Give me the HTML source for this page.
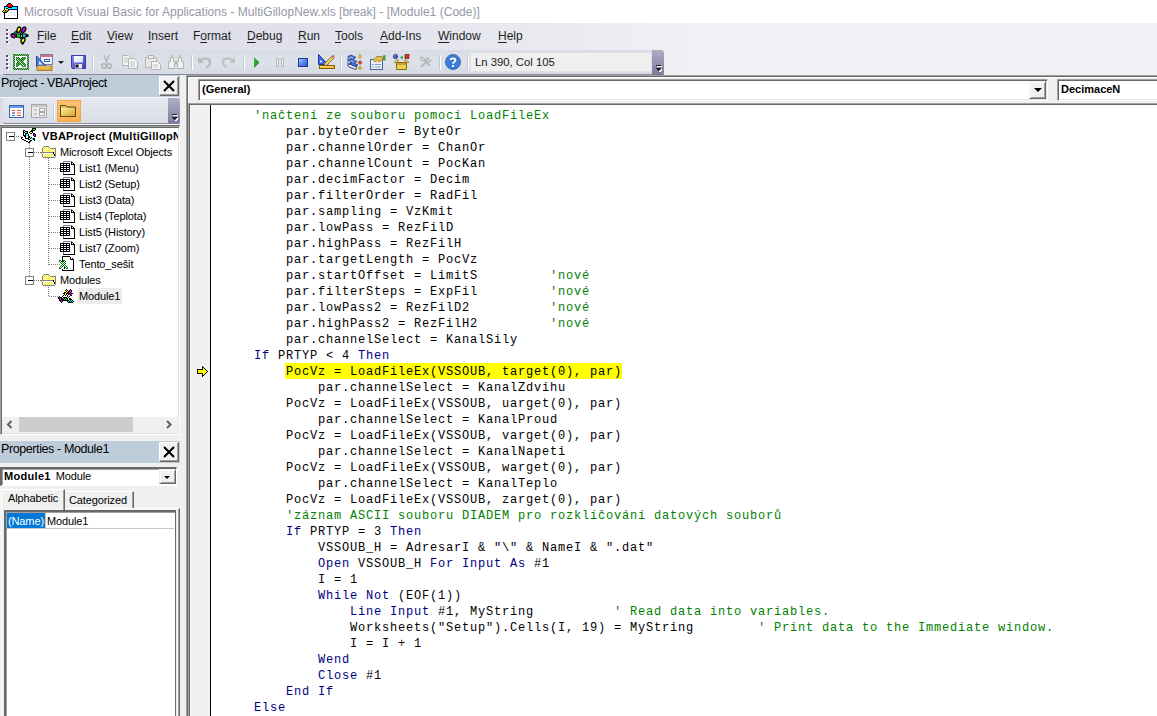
<!DOCTYPE html>
<html><head><meta charset="utf-8">
<style>
*{margin:0;padding:0;box-sizing:border-box}
html,body{width:1157px;height:716px;overflow:hidden;background:#f0f0f0;font-family:"Liberation Sans",sans-serif;position:relative}
.a{position:absolute}
svg{position:absolute;overflow:visible}
.ui{font-family:"Liberation Sans",sans-serif;font-size:12px;color:#1e1e1e;white-space:pre;line-height:14px}
.ui u{text-decoration:underline;text-underline-offset:2px;text-decoration-thickness:1px}
#title{left:0;top:0;width:1157px;height:23px;background:#fff}
#ttext{left:24px;top:5px;color:#9696a6;font-size:12px;letter-spacing:0.03px}
#menubar{display:none}
#dock{left:0;top:23px;width:1157px;height:52px;background:linear-gradient(90deg,#dcdde7 0,#e0e1ea 300px,#e9e9f0 540px,#f0f0f5 700px)}
#tbarea{display:none}
#toolbar{left:3px;top:50px;width:661px;height:25px;border-radius:3px 3px 0 0;background:linear-gradient(#d8dce5 0,#dde1e9 12px,#d6dae3 24px);border-bottom:1px solid #8a89a6}
.grip{width:2px;height:2px;background:#4d4f6d;box-shadow:1px 1px 0 #fff}
.sep{width:1px;background:#fff;border-left:1px solid #c5c8d4}
/* code window */
#codewin{left:186px;top:75px;width:971px;height:641px;background:#f0f0f0;border-left:1px solid #a0a0a0;border-top:1px solid #a0a0a0;box-shadow:inset 1px 1px 0 #696969,inset 2px 2px 0 #fff}
#codewin2{display:none}
.combo{background:#fff;border:1px solid;border-color:#a0a0a0 #fff #fff #a0a0a0;box-shadow:inset 1px 1px 0 #696969,inset -1px -1px 0 #e3e3e3}
.cbt{font-weight:bold;font-size:11px;color:#000;top:3px;left:3px;line-height:13px;white-space:pre}
.dbtn{background:#f0f0f0;border:1px solid;border-color:#f0f0f0 #696969 #696969 #f0f0f0;box-shadow:inset 1px 1px 0 #fff,inset -1px -1px 0 #a0a0a0}
#codepane{left:188px;top:103px;width:969px;height:613px;background:#fff;border-left:1px solid #a0a0a0;border-top:1px solid #a0a0a0;box-shadow:inset 1px 1px 0 #696969}
#margin{left:190px;top:105px;width:21px;height:611px;background:#f0f0f0;border-right:1px solid #000;box-shadow:inset 1px 1px 0 #f8f8f8}
#code{left:222px;top:108px;font-family:"Liberation Mono",monospace;font-size:12px;letter-spacing:0.8px;line-height:16px;white-space:pre;color:#000}
.k{color:#000080}.c{color:#008000}
.hl{background:#ff0;margin-left:-1px;padding:2px 0 0 1px}
/* left panel */
.phdr{background:#bfcddb;height:22px;width:180px;left:0}
.xbtn{width:20px;height:20px;background:#f0f0f0;border:1px solid;border-color:#fff #696969 #696969 #fff;box-shadow:inset -1px -1px 0 #a0a0a0}
#tree{left:0;top:126px;width:180px;height:309px;background:#fff;border:1px solid;border-color:#a0a0a0 #fff #fff #a0a0a0;box-shadow:inset 1px 1px 0 #696969,inset -1px -1px 0 #e3e3e3}
#tline{left:0;top:124px;width:180px;height:2px;background:#696969;border-top:1px solid #f8f8f8}
.ti{font-family:"Liberation Sans",sans-serif;font-size:11px;color:#000;line-height:13px;white-space:pre;letter-spacing:-0.12px}
.dv{border-left:1px dotted #808080;width:1px}
.dh{border-top:1px dotted #808080;height:1px}
.box{width:9px;height:9px;border:1px solid #808080;background:#fff}
.box:after{content:"";position:absolute;left:2px;top:3px;width:5px;height:1px;background:#000}
</style></head><body>

<div id="title" class="a"></div>
<svg style="left:0;top:0" width="24" height="23" viewBox="0 0 24 23" shape-rendering="crispEdges">
 <rect x="4" y="6" width="14" height="13" fill="#000"/>
 <rect x="4" y="6" width="14" height="4" fill="#000080"/>
 <rect x="5" y="7" width="12" height="2" fill="#00ffff"/>
 <rect x="5" y="10" width="12" height="8" fill="#fff"/>
 <g fill="#c0c0c0"><rect x="11" y="12" width="1" height="1"/><rect x="14" y="12" width="1" height="1"/><rect x="8" y="15" width="1" height="1"/><rect x="11" y="15" width="1" height="1"/><rect x="14" y="15" width="1" height="1"/></g>
 <path d="M7 4H8V3H11V4H12V5H13V7H12V8H8V7H7V6H6V5H7Z" fill="#000"/>
 <path d="M8 4H11V5H12V7H8V6H7V5H8Z" fill="#ff0000"/>
 <path d="M2 11H3V10H4V9H6V8H8V9H9V11H8V12H7V13H3V12H2Z" fill="#000"/>
 <path d="M3 11H4V10H5V9H6V10H5V11H4V12H3Z" fill="#ffff00"/>
 <rect x="6" y="9" width="2" height="1" fill="#ffff00"/>
 <path d="M5 11H6V10H8V11H7V12H4V11Z" fill="#808000"/>
</svg>
<div id="ttext" class="a ui">Microsoft Visual Basic for Applications - MultiGillopNew.xls [break] - [Module1 (Code)]</div>

<div id="dock" class="a"></div>
<div id="menubar" class="a"></div>
<div id="tbarea" class="a"></div>
<div id="toolbar" class="a"></div>

<!-- menubar grip + icon -->
<div class="a grip" style="left:6px;top:29px"></div><div class="a grip" style="left:6px;top:33px"></div><div class="a grip" style="left:6px;top:37px"></div><div class="a grip" style="left:6px;top:41px"></div>
<svg style="left:8px;top:25px" width="24" height="22" viewBox="0 0 24 22">
 <path d="M6 9L9 6M12 7L15 10M12 12L14 14" stroke="#000" stroke-width="2.4"/>
 <path d="M6 9L9 6M12 7L15 10M12 12L14 14" stroke="#00e0e0" stroke-width="1.2" stroke-dasharray="1 1"/>
 <ellipse cx="10.8" cy="4.7" rx="1.7" ry="2.8" fill="#ffff00" stroke="#000" stroke-width="1.3" transform="rotate(20 10.8 4.7)"/>
 <ellipse cx="15.8" cy="4.7" rx="1.7" ry="2.8" fill="#ff00ff" stroke="#000" stroke-width="1.3" transform="rotate(25 15.8 4.7)"/>
 <ellipse cx="5.3" cy="10.8" rx="2.4" ry="1.7" fill="#ff00ff" stroke="#000" stroke-width="1.3" transform="rotate(30 5.3 10.8)"/>
 <rect x="8.5" y="9" width="4" height="3.2" fill="#00ff00" stroke="#000" stroke-width="1"/>
 <rect x="14.5" y="9" width="3.5" height="3.2" fill="#00ffff" stroke="#000" stroke-width="1"/>
 <rect x="18" y="9.3" width="2.5" height="2.6" fill="#000"/>
 <ellipse cx="15" cy="15.5" rx="1.7" ry="2.6" fill="#ffff00" stroke="#000" stroke-width="1.3" transform="rotate(30 15 15.5)"/>
 <rect x="13.5" y="17.5" width="2.2" height="2" fill="#000"/>
</svg>

<div class="a ui" style="left:37px;top:29px"><u>F</u>ile</div>
<div class="a ui" style="left:71px;top:29px"><u>E</u>dit</div>
<div class="a ui" style="left:107px;top:29px"><u>V</u>iew</div>
<div class="a ui" style="left:148px;top:29px"><u>I</u>nsert</div>
<div class="a ui" style="left:193px;top:29px">F<u>o</u>rmat</div>
<div class="a ui" style="left:247px;top:29px"><u>D</u>ebug</div>
<div class="a ui" style="left:298px;top:29px"><u>R</u>un</div>
<div class="a ui" style="left:335px;top:29px"><u>T</u>ools</div>
<div class="a ui" style="left:380px;top:29px"><u>A</u>dd-Ins</div>
<div class="a ui" style="left:438px;top:29px"><u>W</u>indow</div>
<div class="a ui" style="left:498px;top:29px"><u>H</u>elp</div>


<div class="a grip" style="left:6px;top:55px"></div><div class="a grip" style="left:6px;top:59px"></div><div class="a grip" style="left:6px;top:63px"></div><div class="a grip" style="left:6px;top:67px"></div>
<!-- excel -->
<svg style="left:13px;top:54px" width="16" height="16" viewBox="0 0 16 16" shape-rendering="crispEdges"><rect x="0" y="0" width="1" height="1" fill="#008000"/><rect x="1" y="0" width="1" height="1" fill="#9aa89a"/><rect x="2" y="0" width="1" height="1" fill="#008000"/><rect x="3" y="0" width="1" height="1" fill="#9aa89a"/><rect x="4" y="0" width="1" height="1" fill="#008000"/><rect x="5" y="0" width="1" height="1" fill="#9aa89a"/><rect x="6" y="0" width="1" height="1" fill="#008000"/><rect x="7" y="0" width="1" height="1" fill="#9aa89a"/><rect x="8" y="0" width="1" height="1" fill="#008000"/><rect x="9" y="0" width="1" height="1" fill="#9aa89a"/><rect x="10" y="0" width="1" height="1" fill="#008000"/><rect x="11" y="0" width="1" height="1" fill="#9aa89a"/><rect x="12" y="0" width="1" height="1" fill="#008000"/><rect x="13" y="0" width="1" height="1" fill="#9aa89a"/><rect x="14" y="0" width="1" height="1" fill="#008000"/><rect x="15" y="0" width="1" height="1" fill="#9aa89a"/><rect x="0" y="1" width="1" height="1" fill="#9aa89a"/><rect x="1" y="1" width="1" height="1" fill="#008000"/><rect x="2" y="1" width="1" height="1" fill="#9aa89a"/><rect x="3" y="1" width="1" height="1" fill="#008000"/><rect x="4" y="1" width="1" height="1" fill="#9aa89a"/><rect x="5" y="1" width="1" height="1" fill="#008000"/><rect x="6" y="1" width="1" height="1" fill="#9aa89a"/><rect x="7" y="1" width="1" height="1" fill="#008000"/><rect x="8" y="1" width="1" height="1" fill="#9aa89a"/><rect x="9" y="1" width="1" height="1" fill="#008000"/><rect x="10" y="1" width="1" height="1" fill="#9aa89a"/><rect x="11" y="1" width="1" height="1" fill="#008000"/><rect x="12" y="1" width="1" height="1" fill="#9aa89a"/><rect x="13" y="1" width="1" height="1" fill="#008000"/><rect x="14" y="1" width="1" height="1" fill="#9aa89a"/><rect x="15" y="1" width="1" height="1" fill="#008000"/><rect x="0" y="2" width="1" height="1" fill="#008000"/><rect x="1" y="2" width="1" height="1" fill="#9aa89a"/><rect x="2" y="2" width="1" height="1" fill="#fff"/><rect x="3" y="2" width="1" height="1" fill="#fff"/><rect x="4" y="2" width="1" height="1" fill="#fff"/><rect x="5" y="2" width="1" height="1" fill="#fff"/><rect x="6" y="2" width="1" height="1" fill="#fff"/><rect x="7" y="2" width="1" height="1" fill="#fff"/><rect x="8" y="2" width="1" height="1" fill="#fff"/><rect x="9" y="2" width="1" height="1" fill="#fff"/><rect x="10" y="2" width="1" height="1" fill="#fff"/><rect x="11" y="2" width="1" height="1" fill="#fff"/><rect x="12" y="2" width="1" height="1" fill="#fff"/><rect x="13" y="2" width="1" height="1" fill="#fff"/><rect x="14" y="2" width="1" height="1" fill="#008000"/><rect x="15" y="2" width="1" height="1" fill="#9aa89a"/><rect x="0" y="3" width="1" height="1" fill="#9aa89a"/><rect x="1" y="3" width="1" height="1" fill="#008000"/><rect x="2" y="3" width="1" height="1" fill="#fff"/><rect x="3" y="3" width="1" height="1" fill="#008000"/><rect x="4" y="3" width="1" height="1" fill="#7a9a7a"/><rect x="5" y="3" width="1" height="1" fill="#008000"/><rect x="6" y="3" width="1" height="1" fill="#fff"/><rect x="7" y="3" width="1" height="1" fill="#fff"/><rect x="8" y="3" width="1" height="1" fill="#fff"/><rect x="9" y="3" width="1" height="1" fill="#008000"/><rect x="10" y="3" width="1" height="1" fill="#7a9a7a"/><rect x="11" y="3" width="1" height="1" fill="#008000"/><rect x="12" y="3" width="1" height="1" fill="#7a9a7a"/><rect x="13" y="3" width="1" height="1" fill="#fff"/><rect x="14" y="3" width="1" height="1" fill="#9aa89a"/><rect x="15" y="3" width="1" height="1" fill="#008000"/><rect x="0" y="4" width="1" height="1" fill="#008000"/><rect x="1" y="4" width="1" height="1" fill="#9aa89a"/><rect x="2" y="4" width="1" height="1" fill="#fff"/><rect x="3" y="4" width="1" height="1" fill="#7a9a7a"/><rect x="4" y="4" width="1" height="1" fill="#008000"/><rect x="5" y="4" width="1" height="1" fill="#7a9a7a"/><rect x="6" y="4" width="1" height="1" fill="#008000"/><rect x="7" y="4" width="1" height="1" fill="#fff"/><rect x="8" y="4" width="1" height="1" fill="#008000"/><rect x="9" y="4" width="1" height="1" fill="#7a9a7a"/><rect x="10" y="4" width="1" height="1" fill="#008000"/><rect x="11" y="4" width="1" height="1" fill="#7a9a7a"/><rect x="12" y="4" width="1" height="1" fill="#008000"/><rect x="13" y="4" width="1" height="1" fill="#fff"/><rect x="14" y="4" width="1" height="1" fill="#008000"/><rect x="15" y="4" width="1" height="1" fill="#9aa89a"/><rect x="0" y="5" width="1" height="1" fill="#9aa89a"/><rect x="1" y="5" width="1" height="1" fill="#008000"/><rect x="2" y="5" width="1" height="1" fill="#fff"/><rect x="3" y="5" width="1" height="1" fill="#008000"/><rect x="4" y="5" width="1" height="1" fill="#fff"/><rect x="5" y="5" width="1" height="1" fill="#008000"/><rect x="6" y="5" width="1" height="1" fill="#7a9a7a"/><rect x="7" y="5" width="1" height="1" fill="#008000"/><rect x="8" y="5" width="1" height="1" fill="#7a9a7a"/><rect x="9" y="5" width="1" height="1" fill="#008000"/><rect x="10" y="5" width="1" height="1" fill="#7a9a7a"/><rect x="11" y="5" width="1" height="1" fill="#008000"/><rect x="12" y="5" width="1" height="1" fill="#fff"/><rect x="13" y="5" width="1" height="1" fill="#fff"/><rect x="14" y="5" width="1" height="1" fill="#9aa89a"/><rect x="15" y="5" width="1" height="1" fill="#008000"/><rect x="0" y="6" width="1" height="1" fill="#008000"/><rect x="1" y="6" width="1" height="1" fill="#9aa89a"/><rect x="2" y="6" width="1" height="1" fill="#fff"/><rect x="3" y="6" width="1" height="1" fill="#7a9a7a"/><rect x="4" y="6" width="1" height="1" fill="#008000"/><rect x="5" y="6" width="1" height="1" fill="#fff"/><rect x="6" y="6" width="1" height="1" fill="#008000"/><rect x="7" y="6" width="1" height="1" fill="#7a9a7a"/><rect x="8" y="6" width="1" height="1" fill="#008000"/><rect x="9" y="6" width="1" height="1" fill="#7a9a7a"/><rect x="10" y="6" width="1" height="1" fill="#008000"/><rect x="11" y="6" width="1" height="1" fill="#fff"/><rect x="12" y="6" width="1" height="1" fill="#fff"/><rect x="13" y="6" width="1" height="1" fill="#fff"/><rect x="14" y="6" width="1" height="1" fill="#008000"/><rect x="15" y="6" width="1" height="1" fill="#9aa89a"/><rect x="0" y="7" width="1" height="1" fill="#9aa89a"/><rect x="1" y="7" width="1" height="1" fill="#008000"/><rect x="2" y="7" width="1" height="1" fill="#fff"/><rect x="3" y="7" width="1" height="1" fill="#fff"/><rect x="4" y="7" width="1" height="1" fill="#7a9a7a"/><rect x="5" y="7" width="1" height="1" fill="#008000"/><rect x="6" y="7" width="1" height="1" fill="#fff"/><rect x="7" y="7" width="1" height="1" fill="#008000"/><rect x="8" y="7" width="1" height="1" fill="#7a9a7a"/><rect x="9" y="7" width="1" height="1" fill="#008000"/><rect x="10" y="7" width="1" height="1" fill="#fff"/><rect x="11" y="7" width="1" height="1" fill="#fff"/><rect x="12" y="7" width="1" height="1" fill="#fff"/><rect x="13" y="7" width="1" height="1" fill="#fff"/><rect x="14" y="7" width="1" height="1" fill="#9aa89a"/><rect x="15" y="7" width="1" height="1" fill="#008000"/><rect x="0" y="8" width="1" height="1" fill="#008000"/><rect x="1" y="8" width="1" height="1" fill="#9aa89a"/><rect x="2" y="8" width="1" height="1" fill="#fff"/><rect x="3" y="8" width="1" height="1" fill="#fff"/><rect x="4" y="8" width="1" height="1" fill="#008000"/><rect x="5" y="8" width="1" height="1" fill="#7a9a7a"/><rect x="6" y="8" width="1" height="1" fill="#008000"/><rect x="7" y="8" width="1" height="1" fill="#fff"/><rect x="8" y="8" width="1" height="1" fill="#008000"/><rect x="9" y="8" width="1" height="1" fill="#7a9a7a"/><rect x="10" y="8" width="1" height="1" fill="#008000"/><rect x="11" y="8" width="1" height="1" fill="#fff"/><rect x="12" y="8" width="1" height="1" fill="#fff"/><rect x="13" y="8" width="1" height="1" fill="#fff"/><rect x="14" y="8" width="1" height="1" fill="#008000"/><rect x="15" y="8" width="1" height="1" fill="#9aa89a"/><rect x="0" y="9" width="1" height="1" fill="#9aa89a"/><rect x="1" y="9" width="1" height="1" fill="#008000"/><rect x="2" y="9" width="1" height="1" fill="#fff"/><rect x="3" y="9" width="1" height="1" fill="#008000"/><rect x="4" y="9" width="1" height="1" fill="#7a9a7a"/><rect x="5" y="9" width="1" height="1" fill="#008000"/><rect x="6" y="9" width="1" height="1" fill="#7a9a7a"/><rect x="7" y="9" width="1" height="1" fill="#008000"/><rect x="8" y="9" width="1" height="1" fill="#fff"/><rect x="9" y="9" width="1" height="1" fill="#008000"/><rect x="10" y="9" width="1" height="1" fill="#7a9a7a"/><rect x="11" y="9" width="1" height="1" fill="#008000"/><rect x="12" y="9" width="1" height="1" fill="#fff"/><rect x="13" y="9" width="1" height="1" fill="#fff"/><rect x="14" y="9" width="1" height="1" fill="#9aa89a"/><rect x="15" y="9" width="1" height="1" fill="#008000"/><rect x="0" y="10" width="1" height="1" fill="#008000"/><rect x="1" y="10" width="1" height="1" fill="#9aa89a"/><rect x="2" y="10" width="1" height="1" fill="#fff"/><rect x="3" y="10" width="1" height="1" fill="#7a9a7a"/><rect x="4" y="10" width="1" height="1" fill="#008000"/><rect x="5" y="10" width="1" height="1" fill="#7a9a7a"/><rect x="6" y="10" width="1" height="1" fill="#008000"/><rect x="7" y="10" width="1" height="1" fill="#7a9a7a"/><rect x="8" y="10" width="1" height="1" fill="#008000"/><rect x="9" y="10" width="1" height="1" fill="#fff"/><rect x="10" y="10" width="1" height="1" fill="#008000"/><rect x="11" y="10" width="1" height="1" fill="#7a9a7a"/><rect x="12" y="10" width="1" height="1" fill="#008000"/><rect x="13" y="10" width="1" height="1" fill="#fff"/><rect x="14" y="10" width="1" height="1" fill="#008000"/><rect x="15" y="10" width="1" height="1" fill="#9aa89a"/><rect x="0" y="11" width="1" height="1" fill="#9aa89a"/><rect x="1" y="11" width="1" height="1" fill="#008000"/><rect x="2" y="11" width="1" height="1" fill="#fff"/><rect x="3" y="11" width="1" height="1" fill="#008000"/><rect x="4" y="11" width="1" height="1" fill="#7a9a7a"/><rect x="5" y="11" width="1" height="1" fill="#008000"/><rect x="6" y="11" width="1" height="1" fill="#fff"/><rect x="7" y="11" width="1" height="1" fill="#fff"/><rect x="8" y="11" width="1" height="1" fill="#7a9a7a"/><rect x="9" y="11" width="1" height="1" fill="#008000"/><rect x="10" y="11" width="1" height="1" fill="#fff"/><rect x="11" y="11" width="1" height="1" fill="#008000"/><rect x="12" y="11" width="1" height="1" fill="#7a9a7a"/><rect x="13" y="11" width="1" height="1" fill="#fff"/><rect x="14" y="11" width="1" height="1" fill="#9aa89a"/><rect x="15" y="11" width="1" height="1" fill="#008000"/><rect x="0" y="12" width="1" height="1" fill="#008000"/><rect x="1" y="12" width="1" height="1" fill="#9aa89a"/><rect x="2" y="12" width="1" height="1" fill="#fff"/><rect x="3" y="12" width="1" height="1" fill="#7a9a7a"/><rect x="4" y="12" width="1" height="1" fill="#008000"/><rect x="5" y="12" width="1" height="1" fill="#fff"/><rect x="6" y="12" width="1" height="1" fill="#fff"/><rect x="7" y="12" width="1" height="1" fill="#fff"/><rect x="8" y="12" width="1" height="1" fill="#fff"/><rect x="9" y="12" width="1" height="1" fill="#7a9a7a"/><rect x="10" y="12" width="1" height="1" fill="#008000"/><rect x="11" y="12" width="1" height="1" fill="#7a9a7a"/><rect x="12" y="12" width="1" height="1" fill="#008000"/><rect x="13" y="12" width="1" height="1" fill="#fff"/><rect x="14" y="12" width="1" height="1" fill="#008000"/><rect x="15" y="12" width="1" height="1" fill="#9aa89a"/><rect x="0" y="13" width="1" height="1" fill="#9aa89a"/><rect x="1" y="13" width="1" height="1" fill="#008000"/><rect x="2" y="13" width="1" height="1" fill="#fff"/><rect x="3" y="13" width="1" height="1" fill="#fff"/><rect x="4" y="13" width="1" height="1" fill="#fff"/><rect x="5" y="13" width="1" height="1" fill="#fff"/><rect x="6" y="13" width="1" height="1" fill="#fff"/><rect x="7" y="13" width="1" height="1" fill="#fff"/><rect x="8" y="13" width="1" height="1" fill="#fff"/><rect x="9" y="13" width="1" height="1" fill="#fff"/><rect x="10" y="13" width="1" height="1" fill="#fff"/><rect x="11" y="13" width="1" height="1" fill="#fff"/><rect x="12" y="13" width="1" height="1" fill="#fff"/><rect x="13" y="13" width="1" height="1" fill="#fff"/><rect x="14" y="13" width="1" height="1" fill="#9aa89a"/><rect x="15" y="13" width="1" height="1" fill="#008000"/><rect x="0" y="14" width="1" height="1" fill="#008000"/><rect x="1" y="14" width="1" height="1" fill="#9aa89a"/><rect x="2" y="14" width="1" height="1" fill="#008000"/><rect x="3" y="14" width="1" height="1" fill="#9aa89a"/><rect x="4" y="14" width="1" height="1" fill="#008000"/><rect x="5" y="14" width="1" height="1" fill="#9aa89a"/><rect x="6" y="14" width="1" height="1" fill="#008000"/><rect x="7" y="14" width="1" height="1" fill="#9aa89a"/><rect x="8" y="14" width="1" height="1" fill="#008000"/><rect x="9" y="14" width="1" height="1" fill="#9aa89a"/><rect x="10" y="14" width="1" height="1" fill="#008000"/><rect x="11" y="14" width="1" height="1" fill="#9aa89a"/><rect x="12" y="14" width="1" height="1" fill="#008000"/><rect x="13" y="14" width="1" height="1" fill="#9aa89a"/><rect x="14" y="14" width="1" height="1" fill="#008000"/><rect x="15" y="14" width="1" height="1" fill="#9aa89a"/><rect x="0" y="15" width="1" height="1" fill="#9aa89a"/><rect x="1" y="15" width="1" height="1" fill="#008000"/><rect x="2" y="15" width="1" height="1" fill="#9aa89a"/><rect x="3" y="15" width="1" height="1" fill="#008000"/><rect x="4" y="15" width="1" height="1" fill="#9aa89a"/><rect x="5" y="15" width="1" height="1" fill="#008000"/><rect x="6" y="15" width="1" height="1" fill="#9aa89a"/><rect x="7" y="15" width="1" height="1" fill="#008000"/><rect x="8" y="15" width="1" height="1" fill="#9aa89a"/><rect x="9" y="15" width="1" height="1" fill="#008000"/><rect x="10" y="15" width="1" height="1" fill="#9aa89a"/><rect x="11" y="15" width="1" height="1" fill="#008000"/><rect x="12" y="15" width="1" height="1" fill="#9aa89a"/><rect x="13" y="15" width="1" height="1" fill="#008000"/><rect x="14" y="15" width="1" height="1" fill="#9aa89a"/><rect x="15" y="15" width="1" height="1" fill="#008000"/></svg>
<!-- design/userform -->
<svg style="left:36px;top:54px" width="17" height="17" viewBox="0 0 17 17">
 <rect x="4.5" y="0.5" width="12" height="10" fill="#eef2fa" stroke="#6f7fa8"/>
 <rect x="5" y="1" width="11" height="2" fill="#e06a8a"/>
 <rect x="8.5" y="5.5" width="5" height="2" fill="#fff" stroke="#3a64b0"/>
 <path d="M0.5 2V12.5H10.5Z" fill="#4a7ee0" stroke="#22449a"/>
 <path d="M3 7V10.5H6.5Z" fill="#eef2fa"/>
 <rect x="1" y="12" width="15" height="4.5" fill="#e2b03a" stroke="#9a6e10" stroke-width=".8"/>
 <path d="M3 12V14M5 12V13.5M7 12V14M9 12V13.5M11 12V14M13 12V13.5" stroke="#fff6c0" stroke-width=".7"/>
</svg>
<svg style="left:58px;top:61px" width="6" height="3"><path d="M0 0H6L3 3Z" fill="#222"/></svg>
<!-- save -->
<svg style="left:71px;top:55px" width="15" height="14" viewBox="0 0 15 14">
 <defs><linearGradient id="gsv" x1="0" y1="0" x2="1" y2="1"><stop offset="0" stop-color="#8a8cf0"/><stop offset=".6" stop-color="#5a5cd0"/><stop offset="1" stop-color="#3a3ca8"/></linearGradient>
 <linearGradient id="glb" x1="0" y1="0" x2="1" y2="1"><stop offset="0" stop-color="#fff"/><stop offset="1" stop-color="#d8dcf0"/></linearGradient></defs>
 <path d="M0.5 0.5H14.5V13.5H1.5L0.5 12.5Z" fill="url(#gsv)" stroke="#3a3aa0"/>
 <rect x="3" y="1" width="9" height="6.5" fill="url(#glb)"/>
 <rect x="4" y="9" width="7" height="4.5" fill="#e8eaf8"/>
 <rect x="4.5" y="9.5" width="3" height="3" fill="#111"/>
</svg>
<div class="a sep" style="left:92px;top:55px;height:15px;width:2px"></div>
<!-- cut (disabled) -->
<svg style="left:101px;top:55px" width="11" height="14" viewBox="0 0 11 14">
 <path d="M3 0L6 8M8 0L5 8" stroke="#b8b8b8" stroke-width="1.4"/>
 <circle cx="3" cy="11" r="2.2" fill="none" stroke="#b0b0b0" stroke-width="1.4"/>
 <circle cx="8" cy="11" r="2.2" fill="none" stroke="#b0b0b0" stroke-width="1.4"/>
</svg>
<!-- copy -->
<svg style="left:122px;top:55px" width="16" height="14" viewBox="0 0 16 14">
 <path d="M0.5 0.5H6.5L8.5 2.5V10.5H0.5Z" fill="#f4f4f4" stroke="#b4b4b4"/>
 <path d="M6.5 3.5H12.5L15.5 6.5V13.5H6.5Z" fill="#f4f4f4" stroke="#b4b4b4"/>
 <path d="M2 3H6M2 5H6M2 7H6M8 7H13M8 9H13M8 11H13" stroke="#c4c4c4"/>
</svg>
<!-- paste -->
<svg style="left:145px;top:55px" width="16" height="15" viewBox="0 0 16 15">
 <path d="M0.5 2.5H11.5V12.5H0.5Z" fill="#e8e8e8" stroke="#b4b4b4"/>
 <rect x="3.5" y="0.5" width="5" height="3" fill="#f0f0f0" stroke="#b0b0b0"/>
 <path d="M6.5 6.5H12.5L15.5 9.5V14.5H6.5Z" fill="#f6f6f6" stroke="#b4b4b4"/>
 <path d="M8 10H13M8 12H13" stroke="#c4c4c4"/>
</svg>
<!-- find -->
<svg style="left:168px;top:55px" width="16" height="14" viewBox="0 0 16 14">
 <path d="M2.5 2.5H5.5V6.5H6.5V13.5H0.5V6.5H2.5Z" fill="#f2f2f2" stroke="#b0b0b0"/>
 <path d="M10.5 2.5H13.5V6.5H15.5V13.5H9.5V6.5H10.5Z" fill="#f2f2f2" stroke="#b0b0b0"/>
 <rect x="6" y="6" width="4" height="3" fill="#c0c0c0"/>
 <rect x="3" y="0" width="2" height="2" fill="#c0c0c0"/><rect x="11" y="0" width="2" height="2" fill="#c0c0c0"/>
</svg>
<div class="a sep" style="left:191px;top:55px;height:15px;width:2px"></div>
<!-- undo/redo -->
<svg style="left:198px;top:56px" width="14" height="12" viewBox="0 0 14 12">
 <path d="M2 5C6 1 12 2 12 6C12 9 10 11 8 11" stroke="#b8b8b8" stroke-width="2.2" fill="none"/>
 <path d="M0 1V7H6Z" fill="#b8b8b8"/>
</svg>
<svg style="left:221px;top:56px" width="14" height="12" viewBox="0 0 14 12">
 <path d="M12 5C8 1 2 2 2 6C2 9 4 11 6 11" stroke="#c0c0c0" stroke-width="2.2" fill="none"/>
 <path d="M14 1V7H8Z" fill="#c0c0c0"/>
</svg>
<div class="a sep" style="left:243px;top:55px;height:15px;width:2px"></div>
<!-- run -->
<svg style="left:254px;top:57px" width="6" height="11" viewBox="0 0 6 11"><defs><linearGradient id="gr" x1="0" y1="0" x2="1" y2="1"><stop offset="0" stop-color="#40c040"/><stop offset="1" stop-color="#108010"/></linearGradient></defs><path d="M0 0L5.5 5.5L0 11Z" fill="url(#gr)"/></svg>
<!-- pause -->
<svg style="left:276px;top:58px" width="8" height="9" shape-rendering="crispEdges"><rect x="0" y="0" width="3" height="9" fill="#b8b8b8"/><rect x="1" y="1" width="1" height="7" fill="#f4f4f4"/><rect x="5" y="0" width="3" height="9" fill="#b8b8b8"/><rect x="6" y="1" width="1" height="7" fill="#f4f4f4"/></svg>
<!-- stop -->
<svg style="left:298px;top:58px" width="10" height="9" viewBox="0 0 10 9"><defs><linearGradient id="gs" x1="0" y1="0" x2="1" y2="1"><stop offset="0" stop-color="#b8d0ff"/><stop offset=".5" stop-color="#5a88e8"/><stop offset="1" stop-color="#2a58c0"/></linearGradient></defs><rect x="0.5" y="0.5" width="9" height="8" fill="url(#gs)" stroke="#1a3a98"/></svg>
<!-- design mode -->
<svg style="left:318px;top:54px" width="17" height="15" viewBox="0 0 17 15">
 <path d="M0.5 0.5V10.5H10Z" fill="#3a6ee0" stroke="#1a3a98"/>
 <circle cx="3" cy="7.5" r="1" fill="#fff"/>
 <path d="M6 10L14 2L16 4L8 12Z" fill="#f0d060" stroke="#7a6020" stroke-width=".8"/>
 <circle cx="15" cy="2.5" r="1.6" fill="#e07060"/>
 <rect x="1.5" y="11.5" width="15" height="3" fill="#f0c040" stroke="#8a6000"/>
 <path d="M3 12V13M5 12V13M7 12V13M9 12V13M11 12V13M13 12V13" stroke="#fff8d0" stroke-width=".8"/>
</svg>
<div class="a sep" style="left:340px;top:55px;height:15px;width:2px"></div>
<!-- project explorer -->
<svg style="left:347px;top:54px" width="16" height="16" viewBox="0 0 16 16">
 <path d="M0.5 11.5L3 10L10 13L9 15.5L2 13Z" fill="#e8eef8" stroke="#3a4a70" stroke-width="1"/>
 <path d="M1 2.5L4 1L9 3.5L6 5Z" fill="#4a7ad8" stroke="#1a3a98" stroke-width=".8"/>
 <path d="M1 6L4 4.5L10 7.5L7 9Z" fill="#4a7ad8" stroke="#1a3a98" stroke-width=".8"/>
 <path d="M2 9.5L5 8L11 11L8 12.5Z" fill="#4a7ad8" stroke="#1a3a98" stroke-width=".8"/>
 <path d="M1 2.5V11M4 4.5V10" stroke="#1a3a98" stroke-width=".8"/>
 <path d="M3 3L6 4.3M3 6.6L7 8.4" stroke="#fff" stroke-width=".7"/>
 <path d="M13 6.5L15 8.5L13 10.5L11 8.5Z" fill="#e84020" stroke="#902010" stroke-width=".6"/>
 <path d="M13 0.5L14.5 2.5L13 4.5L11.5 2.5Z" fill="#f0c030" stroke="#a07010" stroke-width=".6"/>
 <path d="M13 12L14.5 14L13 16L11.5 14Z" fill="#f0c030" stroke="#a07010" stroke-width=".6"/>
</svg>
<!-- properties window -->
<svg style="left:370px;top:55px" width="16" height="15" viewBox="0 0 16 15">
 <rect x="0.5" y="4.5" width="12" height="10" fill="#eef3fb" stroke="#44649a"/>
 <path d="M2 9.5H4M5 9.5H11M2 12H4M5 12H11" stroke="#7a9ad0" stroke-width="1"/>
 <path d="M3 5L7 1.5H12L13 4.5L9 7L7 5.5L5 7Z" fill="#e8c048" stroke="#8a6a10" stroke-width=".7"/>
 <path d="M13 0.5L15.5 0V6L13 5Z" fill="#38a048"/>
</svg>
<!-- object browser -->
<svg style="left:393px;top:54px" width="17" height="16" viewBox="0 0 17 16">
 <circle cx="2.5" cy="2.5" r="2.2" fill="#3a48c8" stroke="#1a2070" stroke-width=".5"/>
 <circle cx="2" cy="2" r=".8" fill="#a0b0ff"/>
 <path d="M6.5 3.5L10 1.5V5.5Z" fill="#38b048"/>
 <rect x="12" y="0.5" width="4" height="4" fill="#e03020" stroke="#601010" stroke-width=".6"/>
 <path d="M3.5 8.5H13.5V15.5H3.5Z" fill="#f0d050" stroke="#8a6a10"/>
 <path d="M1 8.5L3.5 6H6L3.5 8.5ZM16 8.5L13.5 6H11L13.5 8.5Z" fill="#f8e080" stroke="#8a6a10" stroke-width=".7"/>
 <path d="M4 9H13V11H4Z" fill="#c8a030"/>
</svg>
<!-- toolbox (disabled) -->
<svg style="left:419px;top:56px" width="13" height="12" viewBox="0 0 13 12">
 <path d="M2 11L9 4M4 3L11 10" stroke="#b8b8b8" stroke-width="1.8" fill="none"/>
 <path d="M0.5 2.5L3 0.5L6 3.5L3.5 5.5Z" fill="#d0d0d0" stroke="#a8a8a8" stroke-width=".8"/>
 <path d="M9 1.5A2.5 2.5 0 1 0 12 4.5L10.5 4L9.5 3Z" fill="#d0d0d0" stroke="#a8a8a8" stroke-width=".8"/>
</svg>
<div class="a sep" style="left:439px;top:55px;height:15px;width:2px"></div>
<!-- help -->
<svg style="left:445px;top:54px" width="16" height="16" viewBox="0 0 16 16">
 <circle cx="8" cy="8" r="7.5" fill="#3d7bd6" stroke="#2a5aa8" stroke-width=".8"/>
 <path d="M5.6 6C5.6 3.8 10.4 3.8 10.4 6.2C10.4 7.8 8 8 8 9.8" stroke="#fff" stroke-width="1.8" fill="none"/>
 <rect x="7" y="11" width="2" height="2" fill="#fff"/>
</svg>
<div class="a sep" style="left:467px;top:55px;height:15px;width:2px"></div>
<div class="a" style="left:470px;top:52px;width:182px;height:20px;background:#efeff0;border:1px solid #dde0e8"></div>
<div class="a ui" style="left:475px;top:55px;font-size:11.3px;color:#1a1a1a">Ln 390, Col 105</div>
<div class="a" style="left:652px;top:50px;width:12px;height:25px;border-radius:0 3px 3px 0;background:linear-gradient(#aeacc6,#7b7999)"></div>
<svg style="left:655px;top:65px" width="8" height="8" shape-rendering="crispEdges"><rect x="1" y="0" width="5" height="1" fill="#222"/><rect x="2" y="1" width="5" height="1" fill="#fff"/><rect x="1" y="3" width="5" height="1" fill="#222"/><rect x="2" y="4" width="3" height="1" fill="#222"/><rect x="3" y="5" width="1" height="1" fill="#222"/><rect x="5" y="5" width="2" height="1" fill="#fff"/><rect x="4" y="6" width="2" height="1" fill="#fff"/><rect x="6" y="4" width="1" height="1" fill="#fff"/></svg>


<!-- code window -->
<div id="codewin" class="a"></div>
<div id="codewin2" class="a"></div>
<div class="a combo" style="left:198px;top:79px;width:850px;height:22px"><div class="a cbt">(General)</div></div>
<div class="a dbtn" style="left:1029px;top:81px;width:17px;height:18px"></div>
<svg style="left:1034px;top:88px" width="8" height="4"><path d="M0 0H8L4 4Z" fill="#000"/></svg>
<div class="a combo" style="left:1057px;top:79px;width:110px;height:22px"><div class="a cbt">DecimaceN</div></div>
<div id="codepane" class="a"></div>
<div id="margin" class="a"></div>
<svg style="left:195px;top:364px" width="14" height="14" viewBox="0 0 14 14" shape-rendering="crispEdges"><rect x="1" y="5" width="1" height="1" fill="#fff"/><rect x="1" y="6" width="1" height="1" fill="#fff"/><rect x="1" y="7" width="1" height="1" fill="#fff"/><rect x="1" y="8" width="1" height="1" fill="#fff"/><rect x="1" y="9" width="1" height="1" fill="#fff"/><rect x="2" y="4" width="1" height="1" fill="#fff"/><rect x="3" y="4" width="1" height="1" fill="#fff"/><rect x="4" y="4" width="1" height="1" fill="#fff"/><rect x="5" y="4" width="1" height="1" fill="#fff"/><rect x="6" y="4" width="1" height="1" fill="#fff"/><rect x="6" y="1" width="1" height="1" fill="#fff"/><rect x="6" y="2" width="1" height="1" fill="#fff"/><rect x="6" y="3" width="1" height="1" fill="#fff"/><rect x="7" y="1" width="1" height="1" fill="#fff"/><rect x="2" y="10" width="1" height="1" fill="#fff"/><rect x="3" y="10" width="1" height="1" fill="#fff"/><rect x="4" y="10" width="1" height="1" fill="#fff"/><rect x="5" y="10" width="1" height="1" fill="#fff"/><rect x="6" y="10" width="1" height="1" fill="#fff"/><rect x="7" y="2" width="1" height="1" fill="#000"/><rect x="7" y="3" width="1" height="1" fill="#000"/><rect x="8" y="3" width="1" height="1" fill="#000"/><rect x="7" y="4" width="1" height="1" fill="#000"/><rect x="8" y="4" width="1" height="1" fill="#ffff00"/><rect x="9" y="4" width="1" height="1" fill="#000"/><rect x="2" y="5" width="1" height="1" fill="#000"/><rect x="3" y="5" width="1" height="1" fill="#000"/><rect x="4" y="5" width="1" height="1" fill="#000"/><rect x="5" y="5" width="1" height="1" fill="#000"/><rect x="6" y="5" width="1" height="1" fill="#000"/><rect x="7" y="5" width="1" height="1" fill="#000"/><rect x="8" y="5" width="1" height="1" fill="#ffff00"/><rect x="9" y="5" width="1" height="1" fill="#ffff00"/><rect x="10" y="5" width="1" height="1" fill="#000"/><rect x="2" y="6" width="1" height="1" fill="#000"/><rect x="3" y="6" width="1" height="1" fill="#ffff00"/><rect x="4" y="6" width="1" height="1" fill="#ffff00"/><rect x="5" y="6" width="1" height="1" fill="#ffff00"/><rect x="6" y="6" width="1" height="1" fill="#ffff00"/><rect x="7" y="6" width="1" height="1" fill="#ffff00"/><rect x="8" y="6" width="1" height="1" fill="#ffff00"/><rect x="9" y="6" width="1" height="1" fill="#ffff00"/><rect x="10" y="6" width="1" height="1" fill="#ffff00"/><rect x="11" y="6" width="1" height="1" fill="#000"/><rect x="2" y="7" width="1" height="1" fill="#000"/><rect x="3" y="7" width="1" height="1" fill="#ffff00"/><rect x="4" y="7" width="1" height="1" fill="#ffff00"/><rect x="5" y="7" width="1" height="1" fill="#ffff00"/><rect x="6" y="7" width="1" height="1" fill="#ffff00"/><rect x="7" y="7" width="1" height="1" fill="#ffff00"/><rect x="8" y="7" width="1" height="1" fill="#ffff00"/><rect x="9" y="7" width="1" height="1" fill="#ffff00"/><rect x="10" y="7" width="1" height="1" fill="#ffff00"/><rect x="11" y="7" width="1" height="1" fill="#ffff00"/><rect x="12" y="7" width="1" height="1" fill="#000"/><rect x="2" y="8" width="1" height="1" fill="#000"/><rect x="3" y="8" width="1" height="1" fill="#ffff00"/><rect x="4" y="8" width="1" height="1" fill="#ffff00"/><rect x="5" y="8" width="1" height="1" fill="#ffff00"/><rect x="6" y="8" width="1" height="1" fill="#ffff00"/><rect x="7" y="8" width="1" height="1" fill="#ffff00"/><rect x="8" y="8" width="1" height="1" fill="#ffff00"/><rect x="9" y="8" width="1" height="1" fill="#ffff00"/><rect x="10" y="8" width="1" height="1" fill="#ffff00"/><rect x="11" y="8" width="1" height="1" fill="#000"/><rect x="2" y="9" width="1" height="1" fill="#000"/><rect x="3" y="9" width="1" height="1" fill="#000"/><rect x="4" y="9" width="1" height="1" fill="#000"/><rect x="5" y="9" width="1" height="1" fill="#000"/><rect x="6" y="9" width="1" height="1" fill="#000"/><rect x="7" y="9" width="1" height="1" fill="#000"/><rect x="8" y="9" width="1" height="1" fill="#ffff00"/><rect x="9" y="9" width="1" height="1" fill="#ffff00"/><rect x="10" y="9" width="1" height="1" fill="#000"/><rect x="7" y="10" width="1" height="1" fill="#000"/><rect x="8" y="10" width="1" height="1" fill="#ffff00"/><rect x="9" y="10" width="1" height="1" fill="#000"/><rect x="7" y="11" width="1" height="1" fill="#000"/><rect x="8" y="11" width="1" height="1" fill="#000"/><rect x="7" y="12" width="1" height="1" fill="#000"/></svg>
<div id="code" class="a"><span class="c">    'načtení ze souboru pomocí LoadFileEx</span>
        par.byteOrder = ByteOr
        par.channelOrder = ChanOr
        par.channelCount = PocKan
        par.decimFactor = Decim
        par.filterOrder = RadFil
        par.sampling = VzKmit
        par.lowPass = RezFilD
        par.highPass = RezFilH
        par.targetLength = PocVz
        par.startOffset = LimitS         <span class="c">'nové</span>
        par.filterSteps = ExpFil         <span class="c">'nové</span>
        par.lowPass2 = RezFilD2          <span class="c">'nové</span>
        par.highPass2 = RezFilH2         <span class="c">'nové</span>
        par.channelSelect = KanalSily
    <span class="k">If</span> PRTYP &lt; 4 <span class="k">Then</span>
        <span class="hl">PocVz = LoadFileEx(VSSOUB, target(0), par)</span>
            par.channelSelect = KanalZdvihu
        PocVz = LoadFileEx(VSSOUB, uarget(0), par)
            par.channelSelect = KanalProud
        PocVz = LoadFileEx(VSSOUB, varget(0), par)
            par.channelSelect = KanalNapeti
        PocVz = LoadFileEx(VSSOUB, warget(0), par)
            par.channelSelect = KanalTeplo
        PocVz = LoadFileEx(VSSOUB, zarget(0), par)
        <span class="c">'záznam ASCII souboru DIADEM pro rozklíčování datových souborů</span>
        <span class="k">If</span> PRTYP = 3 <span class="k">Then</span>
            VSSOUB_H = AdresarI &amp; "\" &amp; NameI &amp; ".dat"
            <span class="k">Open</span> VSSOUB_H <span class="k">For Input As</span> #1
            I = 1
            <span class="k">While Not</span> (EOF(1))
                <span class="k">Line Input</span> #1, MyString          <span class="c">' Read data into variables.</span>
                Worksheets("Setup").Cells(I, 19) = MyString        <span class="c">' Print data to the Immediate window.</span>
                I = I + 1
            <span class="k">Wend</span>
            <span class="k">Close</span> #1
        <span class="k">End If</span>
    <span class="k">Else</span>
</div>

<!-- left panel -->
<div class="a phdr" style="top:75px"></div>
<div class="a ui" style="left:1px;top:76px;color:#000;font-size:12.5px;letter-spacing:-0.4px">Project - VBAProject</div>
<div class="a xbtn" style="left:159px;top:76px"><svg style="left:3px;top:3px" width="12" height="12"><path d="M1 1L11 11M11 1L1 11" stroke="#000" stroke-width="2.1"/></svg></div>
<div class="a" style="left:0;top:97px;width:180px;height:27px;background:#dadbe6;border-top:1px solid #f4f6f9"></div>
<div class="a" style="left:3px;top:98px;width:177px;height:26px;border-radius:3px 3px 0 2px;background:linear-gradient(#e6e9ef,#d9dde6);border-bottom:1px solid #8a89a6"></div>
<div class="a" style="left:168px;top:98px;width:12px;height:26px;border-radius:0 3px 3px 0;background:linear-gradient(#b1aec9,#7f7d9b)"></div>
<svg style="left:171px;top:114px" width="8" height="8" shape-rendering="crispEdges"><rect x="1" y="0" width="5" height="1" fill="#222"/><rect x="2" y="1" width="5" height="1" fill="#fff"/><rect x="1" y="3" width="5" height="1" fill="#222"/><rect x="2" y="4" width="3" height="1" fill="#222"/><rect x="3" y="5" width="1" height="1" fill="#222"/><rect x="5" y="5" width="2" height="1" fill="#fff"/><rect x="4" y="6" width="2" height="1" fill="#fff"/><rect x="6" y="4" width="1" height="1" fill="#fff"/></svg>

<svg style="left:9px;top:105px" width="15" height="13" viewBox="0 0 15 13">
 <rect x="0.5" y="0.5" width="14" height="12" fill="#fff" stroke="#3a64b8"/>
 <rect x="1" y="1" width="13" height="2" fill="#6c9be6"/>
 <path d="M3 5.5H6M8 5.5H12M3 8H6M8 8H12M3 10.5H6M8 10.5H12" stroke="#e85030" stroke-width="1"/>
 <path d="M3 8H6M3 10.5H6" stroke="#4a74c8"/>
</svg>
<svg style="left:31px;top:104px" width="16" height="14" viewBox="0 0 16 14">
 <rect x="0.5" y="0.5" width="15" height="13" fill="#ececec" stroke="#a8a8a8"/>
 <rect x="1" y="1" width="14" height="2" fill="#c8c8c8"/>
 <path d="M3 6H6M3 10H6" stroke="#a0a0a0"/>
 <rect x="8.5" y="4.5" width="5" height="3" fill="#f6f6f6" stroke="#a8a8a8"/>
 <rect x="8.5" y="8.5" width="5" height="3" fill="#f6f6f6" stroke="#a8a8a8"/>
</svg>
<div class="a sep" style="left:53px;top:105px;height:14px;width:2px"></div>
<div class="a" style="left:57px;top:100px;width:24px;height:22px;background:linear-gradient(#fdc070,#fbb055);border:1px solid #f2a848"></div>
<svg style="left:60px;top:104px" width="16" height="13" viewBox="0 0 16 13">
 <path d="M0.5 1.5H5.5L7 3H15.5V12.5H0.5Z" fill="#e8c050" stroke="#5a4a20"/>
 <path d="M1 4H15V12H1Z" fill="url(#fg)"/>
 <defs><linearGradient id="fg" x1="0" y1="0" x2="1" y2="1"><stop offset="0" stop-color="#fff0a8"/><stop offset="1" stop-color="#d8a020"/></linearGradient></defs>
</svg>


<div id="tline" class="a"></div>
<div id="tree" class="a"></div>
<div class="a" style="left:29px;top:143px;width:1px;height:133px;background:repeating-linear-gradient(#808080 0 1px,transparent 1px 2px)"></div>
<div class="a" style="left:48px;top:158px;width:1px;height:107px;background:repeating-linear-gradient(#808080 0 1px,transparent 1px 2px)"></div>
<div class="a" style="left:48px;top:287px;width:1px;height:10px;background:repeating-linear-gradient(#808080 0 1px,transparent 1px 2px)"></div>
<div class="a box" style="left:6px;top:132px"></div>
<div class="a" style="left:16px;top:136px;width:6px;height:1px;background:repeating-linear-gradient(90deg,#808080 0 1px,transparent 1px 2px)"></div>
<svg style="left:18px;top:128px" width="20" height="15" viewBox="0 0 20 15" shape-rendering="crispEdges"><rect x="14" y="0" width="1" height="1" fill="#000"/><rect x="15" y="0" width="1" height="1" fill="#000"/><rect x="16" y="0" width="1" height="1" fill="#000"/><rect x="17" y="0" width="1" height="1" fill="#000"/><rect x="14" y="1" width="1" height="1" fill="#000"/><rect x="15" y="1" width="1" height="1" fill="#00ff00"/><rect x="16" y="1" width="1" height="1" fill="#00ff00"/><rect x="17" y="1" width="1" height="1" fill="#000"/><rect x="5" y="2" width="1" height="1" fill="#000"/><rect x="6" y="2" width="1" height="1" fill="#000"/><rect x="13" y="2" width="1" height="1" fill="#000"/><rect x="14" y="2" width="1" height="1" fill="#000"/><rect x="15" y="2" width="1" height="1" fill="#000"/><rect x="16" y="2" width="1" height="1" fill="#000"/><rect x="5" y="3" width="1" height="1" fill="#000"/><rect x="6" y="3" width="1" height="1" fill="#00ffff"/><rect x="7" y="3" width="1" height="1" fill="#000"/><rect x="8" y="3" width="1" height="1" fill="#000"/><rect x="9" y="3" width="1" height="1" fill="#000"/><rect x="12" y="3" width="1" height="1" fill="#000"/><rect x="13" y="3" width="1" height="1" fill="#000"/><rect x="14" y="3" width="1" height="1" fill="#000"/><rect x="5" y="4" width="1" height="1" fill="#000"/><rect x="6" y="4" width="1" height="1" fill="#000"/><rect x="7" y="4" width="1" height="1" fill="#00ffff"/><rect x="8" y="4" width="1" height="1" fill="#00ffff"/><rect x="9" y="4" width="1" height="1" fill="#000"/><rect x="11" y="4" width="1" height="1" fill="#000"/><rect x="12" y="4" width="1" height="1" fill="#ffff00"/><rect x="13" y="4" width="1" height="1" fill="#ffff00"/><rect x="14" y="4" width="1" height="1" fill="#000"/><rect x="5" y="5" width="1" height="1" fill="#000"/><rect x="6" y="5" width="1" height="1" fill="#fff"/><rect x="7" y="5" width="1" height="1" fill="#000"/><rect x="8" y="5" width="1" height="1" fill="#000"/><rect x="9" y="5" width="1" height="1" fill="#000"/><rect x="12" y="5" width="1" height="1" fill="#000"/><rect x="13" y="5" width="1" height="1" fill="#000"/><rect x="15" y="5" width="1" height="1" fill="#000"/><rect x="16" y="5" width="1" height="1" fill="#000"/><rect x="5" y="6" width="1" height="1" fill="#000"/><rect x="6" y="6" width="1" height="1" fill="#fff"/><rect x="7" y="6" width="1" height="1" fill="#000"/><rect x="8" y="6" width="1" height="1" fill="#00ffff"/><rect x="10" y="6" width="1" height="1" fill="#000"/><rect x="15" y="6" width="1" height="1" fill="#000"/><rect x="16" y="6" width="1" height="1" fill="#ff00ff"/><rect x="17" y="6" width="1" height="1" fill="#000"/><rect x="5" y="7" width="1" height="1" fill="#000"/><rect x="6" y="7" width="1" height="1" fill="#000"/><rect x="7" y="7" width="1" height="1" fill="#000"/><rect x="8" y="7" width="1" height="1" fill="#00ffff"/><rect x="9" y="7" width="1" height="1" fill="#00ffff"/><rect x="10" y="7" width="1" height="1" fill="#000"/><rect x="15" y="7" width="1" height="1" fill="#000"/><rect x="16" y="7" width="1" height="1" fill="#ff00ff"/><rect x="17" y="7" width="1" height="1" fill="#000"/><rect x="6" y="8" width="1" height="1" fill="#000"/><rect x="7" y="8" width="1" height="1" fill="#000"/><rect x="8" y="8" width="1" height="1" fill="#fff"/><rect x="9" y="8" width="1" height="1" fill="#fff"/><rect x="10" y="8" width="1" height="1" fill="#000"/><rect x="11" y="8" width="1" height="1" fill="#000"/><rect x="16" y="8" width="1" height="1" fill="#000"/><rect x="17" y="8" width="1" height="1" fill="#000"/><rect x="3" y="9" width="1" height="1" fill="#000"/><rect x="4" y="9" width="1" height="1" fill="#000"/><rect x="7" y="9" width="1" height="1" fill="#000"/><rect x="8" y="9" width="1" height="1" fill="#fff"/><rect x="9" y="9" width="1" height="1" fill="#fff"/><rect x="10" y="9" width="1" height="1" fill="#000"/><rect x="11" y="9" width="1" height="1" fill="#000"/><rect x="12" y="9" width="1" height="1" fill="#00ffff"/><rect x="13" y="9" width="1" height="1" fill="#000"/><rect x="3" y="10" width="1" height="1" fill="#000"/><rect x="7" y="10" width="1" height="1" fill="#000"/><rect x="8" y="10" width="1" height="1" fill="#000"/><rect x="9" y="10" width="1" height="1" fill="#000"/><rect x="10" y="10" width="1" height="1" fill="#000"/><rect x="12" y="10" width="1" height="1" fill="#000"/><rect x="13" y="10" width="1" height="1" fill="#00ffff"/><rect x="14" y="10" width="1" height="1" fill="#00ffff"/><rect x="15" y="10" width="1" height="1" fill="#000"/><rect x="16" y="10" width="1" height="1" fill="#000"/><rect x="4" y="11" width="1" height="1" fill="#000"/><rect x="5" y="11" width="1" height="1" fill="#000"/><rect x="10" y="11" width="1" height="1" fill="#000"/><rect x="11" y="11" width="1" height="1" fill="#000"/><rect x="14" y="11" width="1" height="1" fill="#00ffff"/><rect x="15" y="11" width="1" height="1" fill="#000"/><rect x="16" y="11" width="1" height="1" fill="#000"/><rect x="6" y="12" width="1" height="1" fill="#000"/><rect x="7" y="12" width="1" height="1" fill="#000"/><rect x="12" y="12" width="1" height="1" fill="#000"/><rect x="13" y="12" width="1" height="1" fill="#000"/><rect x="16" y="12" width="1" height="1" fill="#000"/><rect x="8" y="13" width="1" height="1" fill="#000"/><rect x="9" y="13" width="1" height="1" fill="#000"/><rect x="11" y="13" width="1" height="1" fill="#000"/><rect x="12" y="13" width="1" height="1" fill="#000"/><rect x="10" y="14" width="1" height="1" fill="#000"/><rect x="11" y="14" width="1" height="1" fill="#000"/></svg>
<div class="a ti" style="left:42px;top:130px;font-weight:bold;width:136px;overflow:hidden;letter-spacing:0.3px">VBAProject (MultiGillopN</div>
<div class="a box" style="left:25px;top:148px"></div>
<div class="a" style="left:34px;top:152px;width:8px;height:1px;background:repeating-linear-gradient(90deg,#808080 0 1px,transparent 1px 2px)"></div>
<svg style="left:41px;top:146px" width="15" height="12" viewBox="0 0 15 12" shape-rendering="crispEdges"><rect x="3" y="0" width="1" height="1" fill="#808080"/><rect x="4" y="0" width="1" height="1" fill="#808080"/><rect x="5" y="0" width="1" height="1" fill="#808080"/><rect x="6" y="0" width="1" height="1" fill="#808080"/><rect x="7" y="0" width="1" height="1" fill="#808080"/><rect x="2" y="1" width="1" height="1" fill="#808080"/><rect x="3" y="1" width="1" height="1" fill="#ffff00"/><rect x="4" y="1" width="1" height="1" fill="#fff"/><rect x="5" y="1" width="1" height="1" fill="#ffff00"/><rect x="6" y="1" width="1" height="1" fill="#fff"/><rect x="7" y="1" width="1" height="1" fill="#ffff00"/><rect x="8" y="1" width="1" height="1" fill="#808080"/><rect x="1" y="2" width="1" height="1" fill="#808080"/><rect x="2" y="2" width="1" height="1" fill="#fff"/><rect x="3" y="2" width="1" height="1" fill="#ffff00"/><rect x="4" y="2" width="1" height="1" fill="#fff"/><rect x="5" y="2" width="1" height="1" fill="#ffff00"/><rect x="6" y="2" width="1" height="1" fill="#fff"/><rect x="7" y="2" width="1" height="1" fill="#ffff00"/><rect x="8" y="2" width="1" height="1" fill="#fff"/><rect x="9" y="2" width="1" height="1" fill="#808080"/><rect x="10" y="2" width="1" height="1" fill="#808080"/><rect x="11" y="2" width="1" height="1" fill="#808080"/><rect x="12" y="2" width="1" height="1" fill="#808080"/><rect x="13" y="2" width="1" height="1" fill="#808080"/><rect x="14" y="2" width="1" height="1" fill="#808080"/><rect x="1" y="3" width="1" height="1" fill="#808080"/><rect x="2" y="3" width="1" height="1" fill="#ffff00"/><rect x="3" y="3" width="1" height="1" fill="#fff"/><rect x="4" y="3" width="1" height="1" fill="#ffff00"/><rect x="5" y="3" width="1" height="1" fill="#fff"/><rect x="6" y="3" width="1" height="1" fill="#ffff00"/><rect x="7" y="3" width="1" height="1" fill="#fff"/><rect x="8" y="3" width="1" height="1" fill="#ffff00"/><rect x="9" y="3" width="1" height="1" fill="#fff"/><rect x="10" y="3" width="1" height="1" fill="#ffff00"/><rect x="11" y="3" width="1" height="1" fill="#fff"/><rect x="12" y="3" width="1" height="1" fill="#ffff00"/><rect x="13" y="3" width="1" height="1" fill="#fff"/><rect x="14" y="3" width="1" height="1" fill="#808080"/><rect x="1" y="4" width="1" height="1" fill="#808080"/><rect x="2" y="4" width="1" height="1" fill="#fff"/><rect x="3" y="4" width="1" height="1" fill="#ffff00"/><rect x="4" y="4" width="1" height="1" fill="#fff"/><rect x="5" y="4" width="1" height="1" fill="#ffff00"/><rect x="6" y="4" width="1" height="1" fill="#fff"/><rect x="7" y="4" width="1" height="1" fill="#ffff00"/><rect x="8" y="4" width="1" height="1" fill="#fff"/><rect x="9" y="4" width="1" height="1" fill="#ffff00"/><rect x="10" y="4" width="1" height="1" fill="#fff"/><rect x="11" y="4" width="1" height="1" fill="#ffff00"/><rect x="12" y="4" width="1" height="1" fill="#fff"/><rect x="13" y="4" width="1" height="1" fill="#ffff00"/><rect x="14" y="4" width="1" height="1" fill="#808080"/><rect x="1" y="5" width="1" height="1" fill="#808080"/><rect x="2" y="5" width="1" height="1" fill="#ffff00"/><rect x="3" y="5" width="1" height="1" fill="#fff"/><rect x="4" y="5" width="1" height="1" fill="#ffff00"/><rect x="5" y="5" width="1" height="1" fill="#fff"/><rect x="6" y="5" width="1" height="1" fill="#ffff00"/><rect x="7" y="5" width="1" height="1" fill="#fff"/><rect x="8" y="5" width="1" height="1" fill="#ffff00"/><rect x="9" y="5" width="1" height="1" fill="#fff"/><rect x="10" y="5" width="1" height="1" fill="#ffff00"/><rect x="11" y="5" width="1" height="1" fill="#fff"/><rect x="12" y="5" width="1" height="1" fill="#ffff00"/><rect x="13" y="5" width="1" height="1" fill="#fff"/><rect x="14" y="5" width="1" height="1" fill="#808080"/><rect x="0" y="6" width="1" height="1" fill="#808080"/><rect x="1" y="6" width="1" height="1" fill="#808080"/><rect x="2" y="6" width="1" height="1" fill="#808080"/><rect x="3" y="6" width="1" height="1" fill="#808080"/><rect x="4" y="6" width="1" height="1" fill="#808080"/><rect x="5" y="6" width="1" height="1" fill="#808080"/><rect x="6" y="6" width="1" height="1" fill="#808080"/><rect x="7" y="6" width="1" height="1" fill="#808080"/><rect x="8" y="6" width="1" height="1" fill="#808080"/><rect x="9" y="6" width="1" height="1" fill="#808080"/><rect x="10" y="6" width="1" height="1" fill="#808080"/><rect x="11" y="6" width="1" height="1" fill="#808080"/><rect x="12" y="6" width="1" height="1" fill="#000"/><rect x="13" y="6" width="1" height="1" fill="#ffff00"/><rect x="14" y="6" width="1" height="1" fill="#808080"/><rect x="0" y="7" width="1" height="1" fill="#808080"/><rect x="1" y="7" width="1" height="1" fill="#fff"/><rect x="2" y="7" width="1" height="1" fill="#fff"/><rect x="3" y="7" width="1" height="1" fill="#fff"/><rect x="4" y="7" width="1" height="1" fill="#fff"/><rect x="5" y="7" width="1" height="1" fill="#fff"/><rect x="6" y="7" width="1" height="1" fill="#fff"/><rect x="7" y="7" width="1" height="1" fill="#fff"/><rect x="8" y="7" width="1" height="1" fill="#fff"/><rect x="9" y="7" width="1" height="1" fill="#fff"/><rect x="10" y="7" width="1" height="1" fill="#fff"/><rect x="11" y="7" width="1" height="1" fill="#fff"/><rect x="12" y="7" width="1" height="1" fill="#000"/><rect x="13" y="7" width="1" height="1" fill="#fff"/><rect x="14" y="7" width="1" height="1" fill="#808080"/><rect x="1" y="8" width="1" height="1" fill="#808080"/><rect x="2" y="8" width="1" height="1" fill="#ffff00"/><rect x="3" y="8" width="1" height="1" fill="#fff"/><rect x="4" y="8" width="1" height="1" fill="#ffff00"/><rect x="5" y="8" width="1" height="1" fill="#fff"/><rect x="6" y="8" width="1" height="1" fill="#ffff00"/><rect x="7" y="8" width="1" height="1" fill="#fff"/><rect x="8" y="8" width="1" height="1" fill="#ffff00"/><rect x="9" y="8" width="1" height="1" fill="#fff"/><rect x="10" y="8" width="1" height="1" fill="#ffff00"/><rect x="11" y="8" width="1" height="1" fill="#fff"/><rect x="12" y="8" width="1" height="1" fill="#ffff00"/><rect x="13" y="8" width="1" height="1" fill="#000"/><rect x="14" y="8" width="1" height="1" fill="#808080"/><rect x="1" y="9" width="1" height="1" fill="#808080"/><rect x="2" y="9" width="1" height="1" fill="#fff"/><rect x="3" y="9" width="1" height="1" fill="#ffff00"/><rect x="4" y="9" width="1" height="1" fill="#fff"/><rect x="5" y="9" width="1" height="1" fill="#ffff00"/><rect x="6" y="9" width="1" height="1" fill="#fff"/><rect x="7" y="9" width="1" height="1" fill="#ffff00"/><rect x="8" y="9" width="1" height="1" fill="#fff"/><rect x="9" y="9" width="1" height="1" fill="#ffff00"/><rect x="10" y="9" width="1" height="1" fill="#fff"/><rect x="11" y="9" width="1" height="1" fill="#ffff00"/><rect x="12" y="9" width="1" height="1" fill="#fff"/><rect x="13" y="9" width="1" height="1" fill="#000"/><rect x="14" y="9" width="1" height="1" fill="#808080"/><rect x="1" y="10" width="1" height="1" fill="#808080"/><rect x="2" y="10" width="1" height="1" fill="#ffff00"/><rect x="3" y="10" width="1" height="1" fill="#fff"/><rect x="4" y="10" width="1" height="1" fill="#ffff00"/><rect x="5" y="10" width="1" height="1" fill="#fff"/><rect x="6" y="10" width="1" height="1" fill="#ffff00"/><rect x="7" y="10" width="1" height="1" fill="#fff"/><rect x="8" y="10" width="1" height="1" fill="#ffff00"/><rect x="9" y="10" width="1" height="1" fill="#fff"/><rect x="10" y="10" width="1" height="1" fill="#ffff00"/><rect x="11" y="10" width="1" height="1" fill="#fff"/><rect x="12" y="10" width="1" height="1" fill="#ffff00"/><rect x="13" y="10" width="1" height="1" fill="#fff"/><rect x="14" y="10" width="1" height="1" fill="#808080"/><rect x="2" y="11" width="1" height="1" fill="#808080"/><rect x="3" y="11" width="1" height="1" fill="#808080"/><rect x="4" y="11" width="1" height="1" fill="#808080"/><rect x="5" y="11" width="1" height="1" fill="#808080"/><rect x="6" y="11" width="1" height="1" fill="#808080"/><rect x="7" y="11" width="1" height="1" fill="#808080"/><rect x="8" y="11" width="1" height="1" fill="#808080"/><rect x="9" y="11" width="1" height="1" fill="#808080"/><rect x="10" y="11" width="1" height="1" fill="#808080"/><rect x="11" y="11" width="1" height="1" fill="#808080"/><rect x="12" y="11" width="1" height="1" fill="#808080"/><rect x="13" y="11" width="1" height="1" fill="#808080"/></svg>
<div class="a ti" style="left:60px;top:146px">Microsoft Excel Objects</div>
<div class="a" style="left:49px;top:168px;width:11px;height:1px;background:repeating-linear-gradient(90deg,#808080 0 1px,transparent 1px 2px)"></div>
<svg style="left:60px;top:161px" width="15" height="14" viewBox="0 0 15 14" shape-rendering="crispEdges">
 <rect x="3" y="0" width="12" height="14" fill="#fff"/>
 <rect x="3" y="0" width="9" height="1" fill="#808080"/><rect x="3" y="0" width="1" height="14" fill="#808080"/>
 <rect x="14" y="3" width="1" height="11" fill="#000"/><rect x="3" y="13" width="12" height="1" fill="#000"/>
 <rect x="11" y="1" width="2" height="1" fill="#000"/><rect x="13" y="2" width="1" height="1" fill="#000"/><rect x="11" y="1" width="1" height="3" fill="#000"/><rect x="11" y="3" width="4" height="1" fill="#000"/>
 <rect x="0" y="2" width="10" height="9" fill="#000"/>
 <g fill="#fff"><rect x="1" y="3" width="2" height="1"/><rect x="4" y="3" width="2" height="1"/><rect x="7" y="3" width="2" height="1"/>
 <rect x="1" y="5" width="2" height="1"/><rect x="4" y="5" width="2" height="1"/><rect x="7" y="5" width="2" height="1"/>
 <rect x="1" y="7" width="2" height="1"/><rect x="4" y="7" width="2" height="1"/><rect x="7" y="7" width="2" height="1"/>
 <rect x="1" y="9" width="2" height="1"/><rect x="4" y="9" width="2" height="1"/><rect x="7" y="9" width="2" height="1"/></g>
</svg>
<div class="a ti" style="left:79px;top:162px">List1 (Menu)</div>
<div class="a" style="left:49px;top:184px;width:11px;height:1px;background:repeating-linear-gradient(90deg,#808080 0 1px,transparent 1px 2px)"></div>
<svg style="left:60px;top:177px" width="15" height="14" viewBox="0 0 15 14" shape-rendering="crispEdges">
 <rect x="3" y="0" width="12" height="14" fill="#fff"/>
 <rect x="3" y="0" width="9" height="1" fill="#808080"/><rect x="3" y="0" width="1" height="14" fill="#808080"/>
 <rect x="14" y="3" width="1" height="11" fill="#000"/><rect x="3" y="13" width="12" height="1" fill="#000"/>
 <rect x="11" y="1" width="2" height="1" fill="#000"/><rect x="13" y="2" width="1" height="1" fill="#000"/><rect x="11" y="1" width="1" height="3" fill="#000"/><rect x="11" y="3" width="4" height="1" fill="#000"/>
 <rect x="0" y="2" width="10" height="9" fill="#000"/>
 <g fill="#fff"><rect x="1" y="3" width="2" height="1"/><rect x="4" y="3" width="2" height="1"/><rect x="7" y="3" width="2" height="1"/>
 <rect x="1" y="5" width="2" height="1"/><rect x="4" y="5" width="2" height="1"/><rect x="7" y="5" width="2" height="1"/>
 <rect x="1" y="7" width="2" height="1"/><rect x="4" y="7" width="2" height="1"/><rect x="7" y="7" width="2" height="1"/>
 <rect x="1" y="9" width="2" height="1"/><rect x="4" y="9" width="2" height="1"/><rect x="7" y="9" width="2" height="1"/></g>
</svg>
<div class="a ti" style="left:79px;top:178px">List2 (Setup)</div>
<div class="a" style="left:49px;top:200px;width:11px;height:1px;background:repeating-linear-gradient(90deg,#808080 0 1px,transparent 1px 2px)"></div>
<svg style="left:60px;top:193px" width="15" height="14" viewBox="0 0 15 14" shape-rendering="crispEdges">
 <rect x="3" y="0" width="12" height="14" fill="#fff"/>
 <rect x="3" y="0" width="9" height="1" fill="#808080"/><rect x="3" y="0" width="1" height="14" fill="#808080"/>
 <rect x="14" y="3" width="1" height="11" fill="#000"/><rect x="3" y="13" width="12" height="1" fill="#000"/>
 <rect x="11" y="1" width="2" height="1" fill="#000"/><rect x="13" y="2" width="1" height="1" fill="#000"/><rect x="11" y="1" width="1" height="3" fill="#000"/><rect x="11" y="3" width="4" height="1" fill="#000"/>
 <rect x="0" y="2" width="10" height="9" fill="#000"/>
 <g fill="#fff"><rect x="1" y="3" width="2" height="1"/><rect x="4" y="3" width="2" height="1"/><rect x="7" y="3" width="2" height="1"/>
 <rect x="1" y="5" width="2" height="1"/><rect x="4" y="5" width="2" height="1"/><rect x="7" y="5" width="2" height="1"/>
 <rect x="1" y="7" width="2" height="1"/><rect x="4" y="7" width="2" height="1"/><rect x="7" y="7" width="2" height="1"/>
 <rect x="1" y="9" width="2" height="1"/><rect x="4" y="9" width="2" height="1"/><rect x="7" y="9" width="2" height="1"/></g>
</svg>
<div class="a ti" style="left:79px;top:194px">List3 (Data)</div>
<div class="a" style="left:49px;top:216px;width:11px;height:1px;background:repeating-linear-gradient(90deg,#808080 0 1px,transparent 1px 2px)"></div>
<svg style="left:60px;top:209px" width="15" height="14" viewBox="0 0 15 14" shape-rendering="crispEdges">
 <rect x="3" y="0" width="12" height="14" fill="#fff"/>
 <rect x="3" y="0" width="9" height="1" fill="#808080"/><rect x="3" y="0" width="1" height="14" fill="#808080"/>
 <rect x="14" y="3" width="1" height="11" fill="#000"/><rect x="3" y="13" width="12" height="1" fill="#000"/>
 <rect x="11" y="1" width="2" height="1" fill="#000"/><rect x="13" y="2" width="1" height="1" fill="#000"/><rect x="11" y="1" width="1" height="3" fill="#000"/><rect x="11" y="3" width="4" height="1" fill="#000"/>
 <rect x="0" y="2" width="10" height="9" fill="#000"/>
 <g fill="#fff"><rect x="1" y="3" width="2" height="1"/><rect x="4" y="3" width="2" height="1"/><rect x="7" y="3" width="2" height="1"/>
 <rect x="1" y="5" width="2" height="1"/><rect x="4" y="5" width="2" height="1"/><rect x="7" y="5" width="2" height="1"/>
 <rect x="1" y="7" width="2" height="1"/><rect x="4" y="7" width="2" height="1"/><rect x="7" y="7" width="2" height="1"/>
 <rect x="1" y="9" width="2" height="1"/><rect x="4" y="9" width="2" height="1"/><rect x="7" y="9" width="2" height="1"/></g>
</svg>
<div class="a ti" style="left:79px;top:210px">List4 (Teplota)</div>
<div class="a" style="left:49px;top:232px;width:11px;height:1px;background:repeating-linear-gradient(90deg,#808080 0 1px,transparent 1px 2px)"></div>
<svg style="left:60px;top:225px" width="15" height="14" viewBox="0 0 15 14" shape-rendering="crispEdges">
 <rect x="3" y="0" width="12" height="14" fill="#fff"/>
 <rect x="3" y="0" width="9" height="1" fill="#808080"/><rect x="3" y="0" width="1" height="14" fill="#808080"/>
 <rect x="14" y="3" width="1" height="11" fill="#000"/><rect x="3" y="13" width="12" height="1" fill="#000"/>
 <rect x="11" y="1" width="2" height="1" fill="#000"/><rect x="13" y="2" width="1" height="1" fill="#000"/><rect x="11" y="1" width="1" height="3" fill="#000"/><rect x="11" y="3" width="4" height="1" fill="#000"/>
 <rect x="0" y="2" width="10" height="9" fill="#000"/>
 <g fill="#fff"><rect x="1" y="3" width="2" height="1"/><rect x="4" y="3" width="2" height="1"/><rect x="7" y="3" width="2" height="1"/>
 <rect x="1" y="5" width="2" height="1"/><rect x="4" y="5" width="2" height="1"/><rect x="7" y="5" width="2" height="1"/>
 <rect x="1" y="7" width="2" height="1"/><rect x="4" y="7" width="2" height="1"/><rect x="7" y="7" width="2" height="1"/>
 <rect x="1" y="9" width="2" height="1"/><rect x="4" y="9" width="2" height="1"/><rect x="7" y="9" width="2" height="1"/></g>
</svg>
<div class="a ti" style="left:79px;top:226px">List5 (History)</div>
<div class="a" style="left:49px;top:248px;width:11px;height:1px;background:repeating-linear-gradient(90deg,#808080 0 1px,transparent 1px 2px)"></div>
<svg style="left:60px;top:241px" width="15" height="14" viewBox="0 0 15 14" shape-rendering="crispEdges">
 <rect x="3" y="0" width="12" height="14" fill="#fff"/>
 <rect x="3" y="0" width="9" height="1" fill="#808080"/><rect x="3" y="0" width="1" height="14" fill="#808080"/>
 <rect x="14" y="3" width="1" height="11" fill="#000"/><rect x="3" y="13" width="12" height="1" fill="#000"/>
 <rect x="11" y="1" width="2" height="1" fill="#000"/><rect x="13" y="2" width="1" height="1" fill="#000"/><rect x="11" y="1" width="1" height="3" fill="#000"/><rect x="11" y="3" width="4" height="1" fill="#000"/>
 <rect x="0" y="2" width="10" height="9" fill="#000"/>
 <g fill="#fff"><rect x="1" y="3" width="2" height="1"/><rect x="4" y="3" width="2" height="1"/><rect x="7" y="3" width="2" height="1"/>
 <rect x="1" y="5" width="2" height="1"/><rect x="4" y="5" width="2" height="1"/><rect x="7" y="5" width="2" height="1"/>
 <rect x="1" y="7" width="2" height="1"/><rect x="4" y="7" width="2" height="1"/><rect x="7" y="7" width="2" height="1"/>
 <rect x="1" y="9" width="2" height="1"/><rect x="4" y="9" width="2" height="1"/><rect x="7" y="9" width="2" height="1"/></g>
</svg>
<div class="a ti" style="left:79px;top:242px">List7 (Zoom)</div>
<div class="a" style="left:49px;top:264px;width:11px;height:1px;background:repeating-linear-gradient(90deg,#808080 0 1px,transparent 1px 2px)"></div>
<svg style="left:59px;top:256px" width="15" height="15" viewBox="0 0 15 15" shape-rendering="crispEdges"><rect x="3" y="0" width="1" height="1" fill="#000"/><rect x="4" y="0" width="1" height="1" fill="#000"/><rect x="5" y="0" width="1" height="1" fill="#000"/><rect x="6" y="0" width="1" height="1" fill="#000"/><rect x="7" y="0" width="1" height="1" fill="#000"/><rect x="8" y="0" width="1" height="1" fill="#000"/><rect x="9" y="0" width="1" height="1" fill="#000"/><rect x="10" y="0" width="1" height="1" fill="#000"/><rect x="3" y="1" width="1" height="1" fill="#000"/><rect x="4" y="1" width="1" height="1" fill="#fff"/><rect x="5" y="1" width="1" height="1" fill="#fff"/><rect x="6" y="1" width="1" height="1" fill="#fff"/><rect x="7" y="1" width="1" height="1" fill="#fff"/><rect x="8" y="1" width="1" height="1" fill="#fff"/><rect x="9" y="1" width="1" height="1" fill="#fff"/><rect x="10" y="1" width="1" height="1" fill="#fff"/><rect x="11" y="1" width="1" height="1" fill="#000"/><rect x="12" y="1" width="1" height="1" fill="#fff"/><rect x="3" y="2" width="1" height="1" fill="#000"/><rect x="4" y="2" width="1" height="1" fill="#fff"/><rect x="5" y="2" width="1" height="1" fill="#fff"/><rect x="6" y="2" width="1" height="1" fill="#fff"/><rect x="7" y="2" width="1" height="1" fill="#fff"/><rect x="8" y="2" width="1" height="1" fill="#fff"/><rect x="9" y="2" width="1" height="1" fill="#fff"/><rect x="10" y="2" width="1" height="1" fill="#fff"/><rect x="11" y="2" width="1" height="1" fill="#000"/><rect x="12" y="2" width="1" height="1" fill="#fff"/><rect x="13" y="2" width="1" height="1" fill="#000"/><rect x="3" y="3" width="1" height="1" fill="#000"/><rect x="4" y="3" width="1" height="1" fill="#fff"/><rect x="5" y="3" width="1" height="1" fill="#fff"/><rect x="6" y="3" width="1" height="1" fill="#fff"/><rect x="7" y="3" width="1" height="1" fill="#fff"/><rect x="8" y="3" width="1" height="1" fill="#fff"/><rect x="9" y="3" width="1" height="1" fill="#fff"/><rect x="10" y="3" width="1" height="1" fill="#fff"/><rect x="11" y="3" width="1" height="1" fill="#000"/><rect x="12" y="3" width="1" height="1" fill="#000"/><rect x="13" y="3" width="1" height="1" fill="#000"/><rect x="14" y="3" width="1" height="1" fill="#000"/><rect x="0" y="4" width="1" height="1" fill="#008000"/><rect x="1" y="4" width="1" height="1" fill="#008000"/><rect x="3" y="4" width="1" height="1" fill="#000"/><rect x="4" y="4" width="1" height="1" fill="#008000"/><rect x="5" y="4" width="1" height="1" fill="#008000"/><rect x="6" y="4" width="1" height="1" fill="#fff"/><rect x="7" y="4" width="1" height="1" fill="#fff"/><rect x="8" y="4" width="1" height="1" fill="#fff"/><rect x="9" y="4" width="1" height="1" fill="#fff"/><rect x="10" y="4" width="1" height="1" fill="#fff"/><rect x="11" y="4" width="1" height="1" fill="#fff"/><rect x="12" y="4" width="1" height="1" fill="#fff"/><rect x="13" y="4" width="1" height="1" fill="#fff"/><rect x="14" y="4" width="1" height="1" fill="#000"/><rect x="0" y="5" width="1" height="1" fill="#008000"/><rect x="1" y="5" width="1" height="1" fill="#fff"/><rect x="2" y="5" width="1" height="1" fill="#008000"/><rect x="3" y="5" width="1" height="1" fill="#000"/><rect x="4" y="5" width="1" height="1" fill="#008000"/><rect x="5" y="5" width="1" height="1" fill="#fff"/><rect x="6" y="5" width="1" height="1" fill="#008000"/><rect x="7" y="5" width="1" height="1" fill="#fff"/><rect x="8" y="5" width="1" height="1" fill="#fff"/><rect x="9" y="5" width="1" height="1" fill="#fff"/><rect x="10" y="5" width="1" height="1" fill="#fff"/><rect x="11" y="5" width="1" height="1" fill="#fff"/><rect x="12" y="5" width="1" height="1" fill="#fff"/><rect x="13" y="5" width="1" height="1" fill="#fff"/><rect x="14" y="5" width="1" height="1" fill="#000"/><rect x="1" y="6" width="1" height="1" fill="#008000"/><rect x="2" y="6" width="1" height="1" fill="#fff"/><rect x="3" y="6" width="1" height="1" fill="#008000"/><rect x="4" y="6" width="1" height="1" fill="#fff"/><rect x="5" y="6" width="1" height="1" fill="#008000"/><rect x="6" y="6" width="1" height="1" fill="#fff"/><rect x="7" y="6" width="1" height="1" fill="#fff"/><rect x="8" y="6" width="1" height="1" fill="#fff"/><rect x="9" y="6" width="1" height="1" fill="#fff"/><rect x="10" y="6" width="1" height="1" fill="#fff"/><rect x="11" y="6" width="1" height="1" fill="#fff"/><rect x="12" y="6" width="1" height="1" fill="#fff"/><rect x="13" y="6" width="1" height="1" fill="#fff"/><rect x="14" y="6" width="1" height="1" fill="#000"/><rect x="2" y="7" width="1" height="1" fill="#008000"/><rect x="3" y="7" width="1" height="1" fill="#fff"/><rect x="4" y="7" width="1" height="1" fill="#008000"/><rect x="5" y="7" width="1" height="1" fill="#fff"/><rect x="6" y="7" width="1" height="1" fill="#008000"/><rect x="7" y="7" width="1" height="1" fill="#fff"/><rect x="8" y="7" width="1" height="1" fill="#fff"/><rect x="9" y="7" width="1" height="1" fill="#fff"/><rect x="10" y="7" width="1" height="1" fill="#fff"/><rect x="11" y="7" width="1" height="1" fill="#fff"/><rect x="12" y="7" width="1" height="1" fill="#fff"/><rect x="13" y="7" width="1" height="1" fill="#fff"/><rect x="14" y="7" width="1" height="1" fill="#000"/><rect x="3" y="8" width="1" height="1" fill="#008000"/><rect x="4" y="8" width="1" height="1" fill="#fff"/><rect x="5" y="8" width="1" height="1" fill="#008000"/><rect x="6" y="8" width="1" height="1" fill="#fff"/><rect x="7" y="8" width="1" height="1" fill="#fff"/><rect x="8" y="8" width="1" height="1" fill="#fff"/><rect x="9" y="8" width="1" height="1" fill="#fff"/><rect x="10" y="8" width="1" height="1" fill="#fff"/><rect x="11" y="8" width="1" height="1" fill="#fff"/><rect x="12" y="8" width="1" height="1" fill="#fff"/><rect x="13" y="8" width="1" height="1" fill="#fff"/><rect x="14" y="8" width="1" height="1" fill="#000"/><rect x="2" y="9" width="1" height="1" fill="#008000"/><rect x="3" y="9" width="1" height="1" fill="#fff"/><rect x="4" y="9" width="1" height="1" fill="#008000"/><rect x="5" y="9" width="1" height="1" fill="#fff"/><rect x="6" y="9" width="1" height="1" fill="#008000"/><rect x="7" y="9" width="1" height="1" fill="#fff"/><rect x="8" y="9" width="1" height="1" fill="#fff"/><rect x="9" y="9" width="1" height="1" fill="#fff"/><rect x="10" y="9" width="1" height="1" fill="#fff"/><rect x="11" y="9" width="1" height="1" fill="#fff"/><rect x="12" y="9" width="1" height="1" fill="#fff"/><rect x="13" y="9" width="1" height="1" fill="#fff"/><rect x="14" y="9" width="1" height="1" fill="#000"/><rect x="1" y="10" width="1" height="1" fill="#008000"/><rect x="2" y="10" width="1" height="1" fill="#fff"/><rect x="3" y="10" width="1" height="1" fill="#008000"/><rect x="4" y="10" width="1" height="1" fill="#fff"/><rect x="5" y="10" width="1" height="1" fill="#008000"/><rect x="6" y="10" width="1" height="1" fill="#fff"/><rect x="7" y="10" width="1" height="1" fill="#008000"/><rect x="8" y="10" width="1" height="1" fill="#fff"/><rect x="9" y="10" width="1" height="1" fill="#fff"/><rect x="10" y="10" width="1" height="1" fill="#fff"/><rect x="11" y="10" width="1" height="1" fill="#fff"/><rect x="12" y="10" width="1" height="1" fill="#fff"/><rect x="13" y="10" width="1" height="1" fill="#fff"/><rect x="14" y="10" width="1" height="1" fill="#000"/><rect x="0" y="11" width="1" height="1" fill="#008000"/><rect x="1" y="11" width="1" height="1" fill="#fff"/><rect x="2" y="11" width="1" height="1" fill="#008000"/><rect x="3" y="11" width="1" height="1" fill="#fff"/><rect x="4" y="11" width="1" height="1" fill="#fff"/><rect x="5" y="11" width="1" height="1" fill="#000"/><rect x="6" y="11" width="1" height="1" fill="#008000"/><rect x="7" y="11" width="1" height="1" fill="#fff"/><rect x="8" y="11" width="1" height="1" fill="#008000"/><rect x="9" y="11" width="1" height="1" fill="#fff"/><rect x="10" y="11" width="1" height="1" fill="#fff"/><rect x="11" y="11" width="1" height="1" fill="#fff"/><rect x="12" y="11" width="1" height="1" fill="#fff"/><rect x="13" y="11" width="1" height="1" fill="#fff"/><rect x="14" y="11" width="1" height="1" fill="#000"/><rect x="0" y="12" width="1" height="1" fill="#008000"/><rect x="1" y="12" width="1" height="1" fill="#008000"/><rect x="2" y="12" width="1" height="1" fill="#fff"/><rect x="3" y="12" width="1" height="1" fill="#fff"/><rect x="4" y="12" width="1" height="1" fill="#fff"/><rect x="5" y="12" width="1" height="1" fill="#000"/><rect x="6" y="12" width="1" height="1" fill="#fff"/><rect x="7" y="12" width="1" height="1" fill="#008000"/><rect x="8" y="12" width="1" height="1" fill="#008000"/><rect x="9" y="12" width="1" height="1" fill="#fff"/><rect x="10" y="12" width="1" height="1" fill="#fff"/><rect x="11" y="12" width="1" height="1" fill="#fff"/><rect x="12" y="12" width="1" height="1" fill="#fff"/><rect x="13" y="12" width="1" height="1" fill="#fff"/><rect x="14" y="12" width="1" height="1" fill="#000"/><rect x="3" y="13" width="1" height="1" fill="#000"/><rect x="4" y="13" width="1" height="1" fill="#fff"/><rect x="5" y="13" width="1" height="1" fill="#fff"/><rect x="6" y="13" width="1" height="1" fill="#fff"/><rect x="7" y="13" width="1" height="1" fill="#fff"/><rect x="8" y="13" width="1" height="1" fill="#fff"/><rect x="9" y="13" width="1" height="1" fill="#fff"/><rect x="10" y="13" width="1" height="1" fill="#fff"/><rect x="11" y="13" width="1" height="1" fill="#fff"/><rect x="12" y="13" width="1" height="1" fill="#fff"/><rect x="13" y="13" width="1" height="1" fill="#fff"/><rect x="14" y="13" width="1" height="1" fill="#000"/><rect x="3" y="14" width="1" height="1" fill="#000"/><rect x="4" y="14" width="1" height="1" fill="#000"/><rect x="5" y="14" width="1" height="1" fill="#000"/><rect x="6" y="14" width="1" height="1" fill="#000"/><rect x="7" y="14" width="1" height="1" fill="#000"/><rect x="8" y="14" width="1" height="1" fill="#000"/><rect x="9" y="14" width="1" height="1" fill="#000"/><rect x="10" y="14" width="1" height="1" fill="#000"/><rect x="11" y="14" width="1" height="1" fill="#000"/><rect x="12" y="14" width="1" height="1" fill="#000"/><rect x="13" y="14" width="1" height="1" fill="#000"/><rect x="14" y="14" width="1" height="1" fill="#000"/></svg>
<div class="a ti" style="left:79px;top:258px">Tento_sešit</div>
<div class="a box" style="left:25px;top:276px"></div>
<div class="a" style="left:34px;top:280px;width:8px;height:1px;background:repeating-linear-gradient(90deg,#808080 0 1px,transparent 1px 2px)"></div>
<svg style="left:41px;top:274px" width="15" height="12" viewBox="0 0 15 12" shape-rendering="crispEdges"><rect x="3" y="0" width="1" height="1" fill="#808080"/><rect x="4" y="0" width="1" height="1" fill="#808080"/><rect x="5" y="0" width="1" height="1" fill="#808080"/><rect x="6" y="0" width="1" height="1" fill="#808080"/><rect x="7" y="0" width="1" height="1" fill="#808080"/><rect x="2" y="1" width="1" height="1" fill="#808080"/><rect x="3" y="1" width="1" height="1" fill="#ffff00"/><rect x="4" y="1" width="1" height="1" fill="#fff"/><rect x="5" y="1" width="1" height="1" fill="#ffff00"/><rect x="6" y="1" width="1" height="1" fill="#fff"/><rect x="7" y="1" width="1" height="1" fill="#ffff00"/><rect x="8" y="1" width="1" height="1" fill="#808080"/><rect x="1" y="2" width="1" height="1" fill="#808080"/><rect x="2" y="2" width="1" height="1" fill="#fff"/><rect x="3" y="2" width="1" height="1" fill="#ffff00"/><rect x="4" y="2" width="1" height="1" fill="#fff"/><rect x="5" y="2" width="1" height="1" fill="#ffff00"/><rect x="6" y="2" width="1" height="1" fill="#fff"/><rect x="7" y="2" width="1" height="1" fill="#ffff00"/><rect x="8" y="2" width="1" height="1" fill="#fff"/><rect x="9" y="2" width="1" height="1" fill="#808080"/><rect x="10" y="2" width="1" height="1" fill="#808080"/><rect x="11" y="2" width="1" height="1" fill="#808080"/><rect x="12" y="2" width="1" height="1" fill="#808080"/><rect x="13" y="2" width="1" height="1" fill="#808080"/><rect x="14" y="2" width="1" height="1" fill="#808080"/><rect x="1" y="3" width="1" height="1" fill="#808080"/><rect x="2" y="3" width="1" height="1" fill="#ffff00"/><rect x="3" y="3" width="1" height="1" fill="#fff"/><rect x="4" y="3" width="1" height="1" fill="#ffff00"/><rect x="5" y="3" width="1" height="1" fill="#fff"/><rect x="6" y="3" width="1" height="1" fill="#ffff00"/><rect x="7" y="3" width="1" height="1" fill="#fff"/><rect x="8" y="3" width="1" height="1" fill="#ffff00"/><rect x="9" y="3" width="1" height="1" fill="#fff"/><rect x="10" y="3" width="1" height="1" fill="#ffff00"/><rect x="11" y="3" width="1" height="1" fill="#fff"/><rect x="12" y="3" width="1" height="1" fill="#ffff00"/><rect x="13" y="3" width="1" height="1" fill="#fff"/><rect x="14" y="3" width="1" height="1" fill="#808080"/><rect x="1" y="4" width="1" height="1" fill="#808080"/><rect x="2" y="4" width="1" height="1" fill="#fff"/><rect x="3" y="4" width="1" height="1" fill="#ffff00"/><rect x="4" y="4" width="1" height="1" fill="#fff"/><rect x="5" y="4" width="1" height="1" fill="#ffff00"/><rect x="6" y="4" width="1" height="1" fill="#fff"/><rect x="7" y="4" width="1" height="1" fill="#ffff00"/><rect x="8" y="4" width="1" height="1" fill="#fff"/><rect x="9" y="4" width="1" height="1" fill="#ffff00"/><rect x="10" y="4" width="1" height="1" fill="#fff"/><rect x="11" y="4" width="1" height="1" fill="#ffff00"/><rect x="12" y="4" width="1" height="1" fill="#fff"/><rect x="13" y="4" width="1" height="1" fill="#ffff00"/><rect x="14" y="4" width="1" height="1" fill="#808080"/><rect x="1" y="5" width="1" height="1" fill="#808080"/><rect x="2" y="5" width="1" height="1" fill="#ffff00"/><rect x="3" y="5" width="1" height="1" fill="#fff"/><rect x="4" y="5" width="1" height="1" fill="#ffff00"/><rect x="5" y="5" width="1" height="1" fill="#fff"/><rect x="6" y="5" width="1" height="1" fill="#ffff00"/><rect x="7" y="5" width="1" height="1" fill="#fff"/><rect x="8" y="5" width="1" height="1" fill="#ffff00"/><rect x="9" y="5" width="1" height="1" fill="#fff"/><rect x="10" y="5" width="1" height="1" fill="#ffff00"/><rect x="11" y="5" width="1" height="1" fill="#fff"/><rect x="12" y="5" width="1" height="1" fill="#ffff00"/><rect x="13" y="5" width="1" height="1" fill="#fff"/><rect x="14" y="5" width="1" height="1" fill="#808080"/><rect x="0" y="6" width="1" height="1" fill="#808080"/><rect x="1" y="6" width="1" height="1" fill="#808080"/><rect x="2" y="6" width="1" height="1" fill="#808080"/><rect x="3" y="6" width="1" height="1" fill="#808080"/><rect x="4" y="6" width="1" height="1" fill="#808080"/><rect x="5" y="6" width="1" height="1" fill="#808080"/><rect x="6" y="6" width="1" height="1" fill="#808080"/><rect x="7" y="6" width="1" height="1" fill="#808080"/><rect x="8" y="6" width="1" height="1" fill="#808080"/><rect x="9" y="6" width="1" height="1" fill="#808080"/><rect x="10" y="6" width="1" height="1" fill="#808080"/><rect x="11" y="6" width="1" height="1" fill="#808080"/><rect x="12" y="6" width="1" height="1" fill="#000"/><rect x="13" y="6" width="1" height="1" fill="#ffff00"/><rect x="14" y="6" width="1" height="1" fill="#808080"/><rect x="0" y="7" width="1" height="1" fill="#808080"/><rect x="1" y="7" width="1" height="1" fill="#fff"/><rect x="2" y="7" width="1" height="1" fill="#fff"/><rect x="3" y="7" width="1" height="1" fill="#fff"/><rect x="4" y="7" width="1" height="1" fill="#fff"/><rect x="5" y="7" width="1" height="1" fill="#fff"/><rect x="6" y="7" width="1" height="1" fill="#fff"/><rect x="7" y="7" width="1" height="1" fill="#fff"/><rect x="8" y="7" width="1" height="1" fill="#fff"/><rect x="9" y="7" width="1" height="1" fill="#fff"/><rect x="10" y="7" width="1" height="1" fill="#fff"/><rect x="11" y="7" width="1" height="1" fill="#fff"/><rect x="12" y="7" width="1" height="1" fill="#000"/><rect x="13" y="7" width="1" height="1" fill="#fff"/><rect x="14" y="7" width="1" height="1" fill="#808080"/><rect x="1" y="8" width="1" height="1" fill="#808080"/><rect x="2" y="8" width="1" height="1" fill="#ffff00"/><rect x="3" y="8" width="1" height="1" fill="#fff"/><rect x="4" y="8" width="1" height="1" fill="#ffff00"/><rect x="5" y="8" width="1" height="1" fill="#fff"/><rect x="6" y="8" width="1" height="1" fill="#ffff00"/><rect x="7" y="8" width="1" height="1" fill="#fff"/><rect x="8" y="8" width="1" height="1" fill="#ffff00"/><rect x="9" y="8" width="1" height="1" fill="#fff"/><rect x="10" y="8" width="1" height="1" fill="#ffff00"/><rect x="11" y="8" width="1" height="1" fill="#fff"/><rect x="12" y="8" width="1" height="1" fill="#ffff00"/><rect x="13" y="8" width="1" height="1" fill="#000"/><rect x="14" y="8" width="1" height="1" fill="#808080"/><rect x="1" y="9" width="1" height="1" fill="#808080"/><rect x="2" y="9" width="1" height="1" fill="#fff"/><rect x="3" y="9" width="1" height="1" fill="#ffff00"/><rect x="4" y="9" width="1" height="1" fill="#fff"/><rect x="5" y="9" width="1" height="1" fill="#ffff00"/><rect x="6" y="9" width="1" height="1" fill="#fff"/><rect x="7" y="9" width="1" height="1" fill="#ffff00"/><rect x="8" y="9" width="1" height="1" fill="#fff"/><rect x="9" y="9" width="1" height="1" fill="#ffff00"/><rect x="10" y="9" width="1" height="1" fill="#fff"/><rect x="11" y="9" width="1" height="1" fill="#ffff00"/><rect x="12" y="9" width="1" height="1" fill="#fff"/><rect x="13" y="9" width="1" height="1" fill="#000"/><rect x="14" y="9" width="1" height="1" fill="#808080"/><rect x="1" y="10" width="1" height="1" fill="#808080"/><rect x="2" y="10" width="1" height="1" fill="#ffff00"/><rect x="3" y="10" width="1" height="1" fill="#fff"/><rect x="4" y="10" width="1" height="1" fill="#ffff00"/><rect x="5" y="10" width="1" height="1" fill="#fff"/><rect x="6" y="10" width="1" height="1" fill="#ffff00"/><rect x="7" y="10" width="1" height="1" fill="#fff"/><rect x="8" y="10" width="1" height="1" fill="#ffff00"/><rect x="9" y="10" width="1" height="1" fill="#fff"/><rect x="10" y="10" width="1" height="1" fill="#ffff00"/><rect x="11" y="10" width="1" height="1" fill="#fff"/><rect x="12" y="10" width="1" height="1" fill="#ffff00"/><rect x="13" y="10" width="1" height="1" fill="#fff"/><rect x="14" y="10" width="1" height="1" fill="#808080"/><rect x="2" y="11" width="1" height="1" fill="#808080"/><rect x="3" y="11" width="1" height="1" fill="#808080"/><rect x="4" y="11" width="1" height="1" fill="#808080"/><rect x="5" y="11" width="1" height="1" fill="#808080"/><rect x="6" y="11" width="1" height="1" fill="#808080"/><rect x="7" y="11" width="1" height="1" fill="#808080"/><rect x="8" y="11" width="1" height="1" fill="#808080"/><rect x="9" y="11" width="1" height="1" fill="#808080"/><rect x="10" y="11" width="1" height="1" fill="#808080"/><rect x="11" y="11" width="1" height="1" fill="#808080"/><rect x="12" y="11" width="1" height="1" fill="#808080"/><rect x="13" y="11" width="1" height="1" fill="#808080"/></svg>
<div class="a ti" style="left:60px;top:274px">Modules</div>
<div class="a" style="left:49px;top:296px;width:10px;height:1px;background:repeating-linear-gradient(90deg,#808080 0 1px,transparent 1px 2px)"></div>
<svg style="left:56px;top:288px" width="20" height="15" viewBox="0 0 20 15" shape-rendering="crispEdges"><rect x="10" y="1" width="1" height="1" fill="#000"/><rect x="14" y="1" width="1" height="1" fill="#000"/><rect x="9" y="2" width="1" height="1" fill="#000"/><rect x="10" y="2" width="1" height="1" fill="#ffff00"/><rect x="11" y="2" width="1" height="1" fill="#000"/><rect x="13" y="2" width="1" height="1" fill="#000"/><rect x="14" y="2" width="1" height="1" fill="#ff00ff"/><rect x="15" y="2" width="1" height="1" fill="#000"/><rect x="9" y="3" width="1" height="1" fill="#ffff00"/><rect x="10" y="3" width="1" height="1" fill="#000"/><rect x="11" y="3" width="1" height="1" fill="#ffff00"/><rect x="12" y="3" width="1" height="1" fill="#000"/><rect x="13" y="3" width="1" height="1" fill="#000"/><rect x="14" y="3" width="1" height="1" fill="#ff00ff"/><rect x="15" y="3" width="1" height="1" fill="#000"/><rect x="8" y="4" width="1" height="1" fill="#000"/><rect x="9" y="4" width="1" height="1" fill="#000"/><rect x="10" y="4" width="1" height="1" fill="#ffff00"/><rect x="11" y="4" width="1" height="1" fill="#000"/><rect x="12" y="4" width="1" height="1" fill="#000"/><rect x="13" y="4" width="1" height="1" fill="#ff00ff"/><rect x="14" y="4" width="1" height="1" fill="#000"/><rect x="15" y="4" width="1" height="1" fill="#ff00ff"/><rect x="7" y="5" width="1" height="1" fill="#000"/><rect x="8" y="5" width="1" height="1" fill="#000"/><rect x="9" y="5" width="1" height="1" fill="#ffff00"/><rect x="10" y="5" width="1" height="1" fill="#000"/><rect x="11" y="5" width="1" height="1" fill="#000"/><rect x="12" y="5" width="1" height="1" fill="#000"/><rect x="13" y="5" width="1" height="1" fill="#000"/><rect x="14" y="5" width="1" height="1" fill="#ff00ff"/><rect x="15" y="5" width="1" height="1" fill="#000"/><rect x="16" y="5" width="1" height="1" fill="#000"/><rect x="8" y="6" width="1" height="1" fill="#000"/><rect x="9" y="6" width="1" height="1" fill="#ffff00"/><rect x="10" y="6" width="1" height="1" fill="#000"/><rect x="12" y="6" width="1" height="1" fill="#000"/><rect x="13" y="6" width="1" height="1" fill="#ff00ff"/><rect x="14" y="6" width="1" height="1" fill="#000"/><rect x="15" y="6" width="1" height="1" fill="#ff00ff"/><rect x="7" y="7" width="1" height="1" fill="#000"/><rect x="9" y="7" width="1" height="1" fill="#000"/><rect x="11" y="7" width="1" height="1" fill="#000"/><rect x="14" y="7" width="1" height="1" fill="#000"/><rect x="15" y="7" width="1" height="1" fill="#000"/><rect x="3" y="8" width="1" height="1" fill="#000"/><rect x="6" y="8" width="1" height="1" fill="#000"/><rect x="11" y="8" width="1" height="1" fill="#000"/><rect x="13" y="8" width="1" height="1" fill="#000"/><rect x="2" y="9" width="1" height="1" fill="#000"/><rect x="3" y="9" width="1" height="1" fill="#ff00ff"/><rect x="4" y="9" width="1" height="1" fill="#000"/><rect x="5" y="9" width="1" height="1" fill="#000"/><rect x="7" y="9" width="1" height="1" fill="#000"/><rect x="8" y="9" width="1" height="1" fill="#000"/><rect x="9" y="9" width="1" height="1" fill="#000"/><rect x="10" y="9" width="1" height="1" fill="#000"/><rect x="12" y="9" width="1" height="1" fill="#000"/><rect x="2" y="10" width="1" height="1" fill="#000"/><rect x="3" y="10" width="1" height="1" fill="#000"/><rect x="4" y="10" width="1" height="1" fill="#ff00ff"/><rect x="5" y="10" width="1" height="1" fill="#000"/><rect x="6" y="10" width="1" height="1" fill="#000"/><rect x="7" y="10" width="1" height="1" fill="#00ff00"/><rect x="8" y="10" width="1" height="1" fill="#000"/><rect x="9" y="10" width="1" height="1" fill="#00ff00"/><rect x="10" y="10" width="1" height="1" fill="#000"/><rect x="11" y="10" width="1" height="1" fill="#000"/><rect x="13" y="10" width="1" height="1" fill="#000"/><rect x="14" y="10" width="1" height="1" fill="#000"/><rect x="3" y="11" width="1" height="1" fill="#000"/><rect x="4" y="11" width="1" height="1" fill="#ff00ff"/><rect x="5" y="11" width="1" height="1" fill="#000"/><rect x="6" y="11" width="1" height="1" fill="#000"/><rect x="7" y="11" width="1" height="1" fill="#000"/><rect x="8" y="11" width="1" height="1" fill="#00ff00"/><rect x="9" y="11" width="1" height="1" fill="#000"/><rect x="10" y="11" width="1" height="1" fill="#00ff00"/><rect x="11" y="11" width="1" height="1" fill="#000"/><rect x="13" y="11" width="1" height="1" fill="#000"/><rect x="14" y="11" width="1" height="1" fill="#000"/><rect x="15" y="11" width="1" height="1" fill="#000"/><rect x="3" y="12" width="1" height="1" fill="#000"/><rect x="4" y="12" width="1" height="1" fill="#000"/><rect x="5" y="12" width="1" height="1" fill="#ff00ff"/><rect x="6" y="12" width="1" height="1" fill="#000"/><rect x="7" y="12" width="1" height="1" fill="#000"/><rect x="8" y="12" width="1" height="1" fill="#000"/><rect x="9" y="12" width="1" height="1" fill="#000"/><rect x="10" y="12" width="1" height="1" fill="#000"/><rect x="11" y="12" width="1" height="1" fill="#000"/><rect x="12" y="12" width="1" height="1" fill="#000"/><rect x="13" y="12" width="1" height="1" fill="#00ffff"/><rect x="14" y="12" width="1" height="1" fill="#000"/><rect x="15" y="12" width="1" height="1" fill="#00ffff"/><rect x="16" y="12" width="1" height="1" fill="#000"/><rect x="4" y="13" width="1" height="1" fill="#000"/><rect x="5" y="13" width="1" height="1" fill="#ff00ff"/><rect x="6" y="13" width="1" height="1" fill="#000"/><rect x="11" y="13" width="1" height="1" fill="#000"/><rect x="12" y="13" width="1" height="1" fill="#00ffff"/><rect x="13" y="13" width="1" height="1" fill="#000"/><rect x="14" y="13" width="1" height="1" fill="#00ffff"/><rect x="15" y="13" width="1" height="1" fill="#000"/><rect x="16" y="13" width="1" height="1" fill="#00ffff"/><rect x="17" y="13" width="1" height="1" fill="#000"/><rect x="5" y="14" width="1" height="1" fill="#000"/><rect x="12" y="14" width="1" height="1" fill="#000"/><rect x="13" y="14" width="1" height="1" fill="#000"/><rect x="14" y="14" width="1" height="1" fill="#000"/><rect x="15" y="14" width="1" height="1" fill="#000"/><rect x="16" y="14" width="1" height="1" fill="#000"/></svg>
<div class="a" style="left:78px;top:288px;width:44px;height:16px;background:#ececec"></div>
<div class="a ti" style="left:79px;top:290px">Module1</div>


<!-- scrollbar -->
<div class="a" style="left:2px;top:417px;width:176px;height:16px;background:#f0f0f0"></div>
<div class="a" style="left:19px;top:417px;width:114px;height:15px;background:#cdcdcd"></div>
<svg style="left:6px;top:420px" width="7" height="10"><path d="M5.5 1L2 4.5L5.5 8" stroke="#606060" stroke-width="2" fill="none"/></svg>
<svg style="left:166px;top:420px" width="7" height="10"><path d="M1 1L4.5 4.5L1 8" stroke="#606060" stroke-width="2" fill="none"/></svg>

<!-- properties -->
<div class="a phdr" style="top:441px"></div>
<div class="a ui" style="left:1px;top:442px;color:#000;font-size:12.5px;letter-spacing:-0.4px">Properties - Module1</div>
<div class="a xbtn" style="left:159px;top:442px"><svg style="left:3px;top:3px" width="12" height="12"><path d="M1 1L11 11M11 1L1 11" stroke="#000" stroke-width="2.1"/></svg></div>

<div class="a" style="left:0;top:467px;width:177px;height:19px;background:#fff;border-top:2px solid #696969;border-left:2px solid #696969;border-right:1px solid #fff;border-bottom:1px solid #fff;box-shadow:inset 1px 1px 0 #a0a0a0"></div>
<div class="a ti" style="left:4px;top:470px"><b style="letter-spacing:0.3px">Module1</b> <span style="margin-left:2px">Module</span></div>
<div class="a dbtn" style="left:159px;top:469px;width:17px;height:15px"></div>
<svg style="left:164px;top:476px" width="6" height="3"><path d="M0 0H6L3 3Z" fill="#000"/></svg>
<!-- tabs -->
<div class="a" style="left:1px;top:508px;width:179px;height:208px;background:#f0f0f0;border-left:1px solid #fff;border-top:1px solid #fff;border-right:1px solid #696969;box-shadow:inset -1px 0 0 #a0a0a0"></div>
<div class="a" style="left:1px;top:489px;width:64px;height:21px;background:#f0f0f0;border-left:1px solid #fff;border-top:1px solid #fff;border-right:1px solid #696969;box-shadow:inset -1px 0 0 #a0a0a0"></div>
<div class="a ti" style="left:8px;top:492px">Alphabetic</div>
<div class="a" style="left:65px;top:491px;width:69px;height:17px;background:#f0f0f0;border-top:1px solid #fff;border-right:1px solid #696969;box-shadow:inset -1px 0 0 #a0a0a0"></div>
<div class="a ti" style="left:69px;top:494px">Categorized</div>
<!-- grid -->
<div class="a" style="left:4px;top:510px;width:172px;height:206px;background:#fff;border-left:2px solid #696969;border-top:2px solid #696969;border-right:1px solid #696969;box-shadow:inset 1px 1px 0 #a0a0a0,inset -1px 0 0 #fff"></div>
<div class="a" style="left:7px;top:528px;width:167px;height:1px;background:#c8c8c8"></div>
<div class="a" style="left:7px;top:513px;width:38px;height:15px;background:#0078d7"></div>
<div class="a" style="left:45px;top:513px;width:1px;height:15px;background:#c8c8c8"></div>
<div class="a ti" style="left:8px;top:515px;color:#fff">(Name)</div>
<div class="a ti" style="left:47px;top:515px">Module1</div>


</body></html>
